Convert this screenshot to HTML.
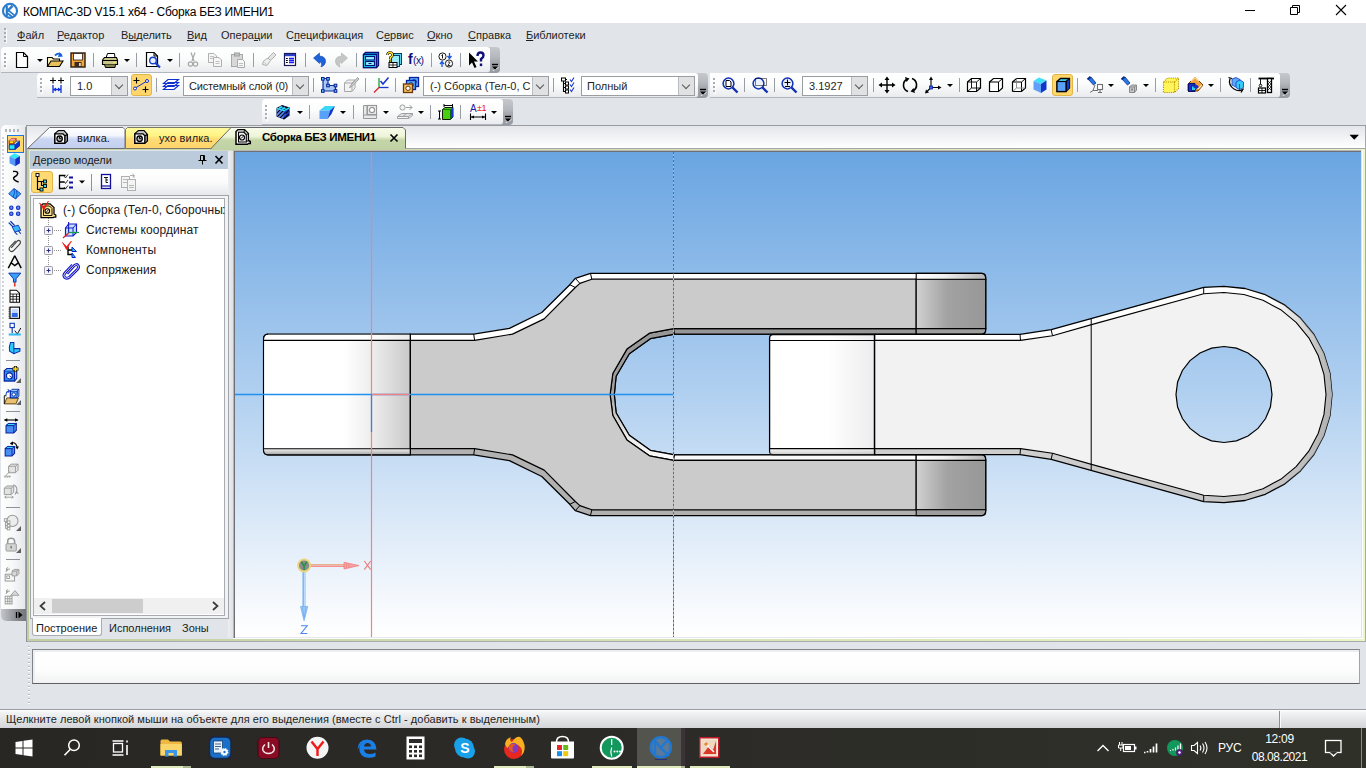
<!DOCTYPE html>
<html><head><meta charset="utf-8"><title>KOMPAS-3D</title>
<style>
*{box-sizing:border-box;margin:0;padding:0}
html,body{width:1366px;height:768px;overflow:hidden;background:#e1e5e9;font-family:"Liberation Sans",sans-serif;font-size:11px;color:#1e1e1e}
.abs{position:absolute}
#title{left:0;top:0;width:1366px;height:23px;background:#fff}
#title .t{left:23px;top:5px;font-size:12px;letter-spacing:-0.23px;color:#000;white-space:pre}
#menu{left:0;top:23px;width:1366px;height:25px;background:#e1e5e9}
#menu span{position:absolute;top:6px;font-size:11px;color:#1e1e1e;white-space:pre}
#menu u{text-decoration:underline;text-underline-offset:1px}
.tb{position:absolute;height:25px;background:linear-gradient(#ffffff 0%,#fbfcfc 45%,#e9ebee 100%);border-bottom:1px solid #b3b7bd;border-radius:0 0 0 0}
.tbend{position:absolute;height:25px;width:9px;background:linear-gradient(#c6c8cc 0%,#b4b7bc 40%,#a2a6ad 60%,#969aa2 100%);border-radius:0 4px 4px 0}
.grip{position:absolute;width:2px;top:4px;height:15px;background:repeating-linear-gradient(#a9adb3 0 2px,transparent 2px 4px);box-shadow:1px 1px 0 rgba(255,255,255,.9)}
.sep{position:absolute;top:4px;width:1px;height:14px;background:#9a9da3}
.ic{position:absolute}
.combo{position:absolute;height:19px;top:3px;background:#fff;border:1px solid #9a9da2;font-size:11px;color:#1e1e1e;white-space:pre;overflow:hidden}
.combo span{position:absolute;left:4px;top:3px}
.combo i{position:absolute;right:0;top:0;width:16px;height:18px;background:#e0e1e3;border-left:1px solid #b9bcc0}
.combo i:after{content:"";position:absolute;left:4px;top:4.500px;width:5px;height:5px;border-right:1px solid #555;border-bottom:1px solid #555;transform:rotate(45deg)}
.dd{position:absolute;width:0;height:0;border-left:3px solid transparent;border-right:3px solid transparent;border-top:3px solid #000}
#taskbar{left:0;top:728px;width:1366px;height:40px;background:linear-gradient(90deg,#292724 0%,#2c2b27 50%,#2f3129 100%)}
#status{left:0;top:709px;width:1366px;height:19px;border-top:1px solid #9a9da2;background:linear-gradient(#ffffff 0,#f3f4f5 2px,#e4e6e8 50%,#d3d5d8 100%)}
#status span{position:absolute;left:6px;top:3px;font-size:11px;color:#1e1e1e;white-space:pre;letter-spacing:0.04px}
</style></head><body>
<div id="title" class="abs"><span class="abs t">КОМПАС-3D V15.1 x64 - Сборка БЕЗ ИМЕНИ1</span></div>
<svg class="abs" style="left:0;top:0" width="1366" height="23" fill="none">
<circle cx="10" cy="10.900" r="7" fill="#fff" stroke="#2a7ccc" stroke-width="2.100"/>
<path d="M6.800,6 L6.800,16" stroke="#2a7ccc" stroke-width="2.200"/><path d="M7,11.300 L12.500,5.800" stroke="#2a7ccc" stroke-width="2.400"/><path d="M8,10.200 L15.500,16.200 M6.500,12.500 L13,17.500" stroke="#2a7ccc" stroke-width="1.700"/>
<path d="M1245,10.500 L1255,10.500" stroke="#000" stroke-width="1"/>
<path d="M1290.500,7.500 L1297.500,7.500 L1297.500,14.500 L1290.500,14.500Z M1292.500,7.500 L1292.500,5.500 L1299.500,5.500 L1299.500,12.500 L1297.500,12.500" stroke="#000" stroke-width="1"/>
<path d="M1336,5 L1346,15 M1346,5 L1336,15" stroke="#000" stroke-width="1.100"/>
</svg>
<div id="menu" class="abs">
<div class="grip" style="left:4px;top:5px;height:14px"></div>
<span style="left:17px"><u>Ф</u>айл</span>
<span style="left:57px"><u>Р</u>едактор</span>
<span style="left:121px">В<u>ы</u>делить</span>
<span style="left:187px"><u>В</u>ид</span>
<span style="left:221px">Опера<u>ц</u>ии</span>
<span style="left:286px">С<u>п</u>ецификация</span>
<span style="left:376px">С<u>е</u>рвис</span>
<span style="left:427px"><u>О</u>кно</span>
<span style="left:468px"><u>С</u>правка</span>
<span style="left:526px"><u>Б</u>иблиотеки</span>
</div>
<!--TOOLBARS-->
<div class="tbend" style="left:487px;top:47px;height:26px;width:13px"></div>
<div class="tb" style="left:1px;top:47px;width:489px;height:26px;border-radius:4px 3px 3px 0"></div>
<div class="grip" style="left:4px;top:53px"></div>
<svg class="abs" style="left:491px;top:63px" width="8" height="8"><path d="M1.5,8 L7.5,4.500" stroke="#fff" stroke-width="0.900" opacity="0.850"/><path d="M1,1.500 L7,1.500" stroke="#000" stroke-width="1.400"/><path d="M1,3.500 L7,3.500 L4,6.800Z" fill="#000"/></svg>
<svg class="ic" style="left:13px;top:51px" width="18" height="18" viewBox="0 0 18 18" fill="none"><path d="M3.5,1.5 L10.500,1.500 L14.500,5.500 L14.500,16.500 L3.500,16.500Z" fill="#fff" stroke="#000" stroke-width="1.2"/><path d="M10.500,1.500 L10.500,5.500 L14.500,5.500" stroke="#000" stroke-width="1"/></svg>
<div class="dd" style="left:37px;top:59px"></div>
<svg class="ic" style="left:46px;top:51px" width="18" height="18" viewBox="0 0 18 18" fill="none"><path d="M1.500,15.500 L1.500,6.500 L6,6.500 L7.500,8 L13.500,8 L13.500,10" fill="#fff6c0" stroke="#000" stroke-width="1.1"/><path d="M1.500,15.500 L5,10 L17,10 L13.500,15.500Z" fill="#e9c35a" stroke="#000" stroke-width="1.1"/><path d="M9,4.500 Q12.500,1 15.500,4" stroke="#1560e0" stroke-width="1.800"/><path d="M13.500,1 L17,5.500 L12,6Z" fill="#1560e0"/></svg>
<svg class="ic" style="left:69px;top:51px" width="18" height="18" viewBox="0 0 18 18" fill="none"><rect x="2" y="2" width="14" height="14" fill="#f0a43a" stroke="#2a1a10" stroke-width="1.4"/><rect x="4.500" y="2.500" width="9" height="6.500" fill="#fff" stroke="#2a1a10" stroke-width="0.8"/><rect x="5.500" y="11" width="7" height="5" fill="#3a2a20"/><rect x="10" y="12" width="1.800" height="3" fill="#f0d8b0"/></svg>
<div class="sep" style="left:93px;top:53px"></div>
<svg class="ic" style="left:101px;top:51px" width="18" height="18" viewBox="0 0 18 18" fill="none"><path d="M5,7 L6.500,2.500 L13.500,2.500 L14,7" fill="#fff" stroke="#000"/><path d="M1.500,9 L3.500,6.500 L15.500,6.500 L16.500,9 L16.500,13.500 L1.500,13.500Z" fill="#c9c48a" stroke="#000" stroke-width="1.1"/><path d="M1.500,9.500 L16.500,9.500" stroke="#000"/><path d="M3.500,13.500 L4.500,16.500 L14,16.500 L14.500,13.500" fill="#8a8650" stroke="#000"/><rect x="12" y="10.800" width="3" height="1.400" fill="#f0e060"/></svg>
<div class="dd" style="left:124px;top:59px"></div>
<div class="sep" style="left:136px;top:53px"></div>
<svg class="ic" style="left:144px;top:51px" width="18" height="18" viewBox="0 0 18 18" fill="none"><path d="M2.500,1.500 L10,1.500 L13.500,5 L13.500,15.500 L2.500,15.500Z" fill="#fff" stroke="#000" stroke-width="1.2"/><path d="M10,1.500 L10,5 L13.500,5" stroke="#000"/><circle cx="9" cy="9.500" r="3.300" fill="#e8f2ff" stroke="#1540c8" stroke-width="1.400"/><path d="M11.500,12 L16,16.500" stroke="#1540c8" stroke-width="2.200"/></svg>
<div class="dd" style="left:167px;top:59px"></div>
<div class="sep" style="left:179px;top:53px"></div>
<svg class="ic" style="left:184px;top:51px" width="18" height="18" viewBox="0 0 18 18" fill="none"><path d="M7,1.500 L10,10 M11,1.500 L8,10" stroke="#a8a8a8" stroke-width="1.2"/><circle cx="6.500" cy="13" r="2.200" stroke="#a8a8a8" stroke-width="1.200"/><circle cx="11.500" cy="13" r="2.200" stroke="#a8a8a8" stroke-width="1.200"/></svg>
<svg class="ic" style="left:206px;top:51px" width="18" height="18" viewBox="0 0 18 18" fill="none"><path d="M2.500,2.500 L8,2.500 L10.500,5 L10.500,11.500 L2.500,11.500Z" fill="#f6f6f6" stroke="#b0b0b0"/><path d="M7.500,6.500 L13,6.500 L15.500,9 L15.500,15.500 L7.500,15.500Z" fill="#f6f6f6" stroke="#b0b0b0"/><path d="M4,5.500 L8,5.500 M4,7.500 L7,7.500 M9.500,10.500 L13.500,10.500 M9.500,12.500 L13.500,12.500" stroke="#c0c0c0"/></svg>
<svg class="ic" style="left:229px;top:51px" width="18" height="18" viewBox="0 0 18 18" fill="none"><rect x="2.500" y="3.500" width="11" height="12" fill="#d8d8d8" stroke="#a8a8a8"/><rect x="5.500" y="2" width="5" height="3" fill="#c0c0c0" stroke="#a0a0a0"/><path d="M8.500,8.500 L13.500,8.500 L15.500,10.500 L15.500,16.500 L8.500,16.500Z" fill="#f8f8f8" stroke="#a8a8a8"/><path d="M10,12.500 L14,12.500 M10,14.500 L14,14.500" stroke="#c0c0c0"/></svg>
<div class="sep" style="left:253px;top:53px"></div>
<svg class="ic" style="left:260px;top:51px" width="18" height="18" viewBox="0 0 18 18" fill="none"><path d="M13.500,1.500 L16,4 L10.500,9.500 L8,7Z" fill="#e4e4e4" stroke="#b0b0b0"/><path d="M8,7 L10.500,9.500 L7,14.500 L2.500,13.500 L3.500,10 Z" fill="#eee" stroke="#b0b0b0"/><path d="M4.500,11.500 L6.500,13.500" stroke="#c0c0c0"/></svg>
<svg class="ic" style="left:281px;top:51px" width="18" height="18" viewBox="0 0 18 18" fill="none"><rect x="3.500" y="2.500" width="11" height="12" fill="#fff" stroke="#1a1a5a" stroke-width="1.200"/><rect x="4" y="3" width="10" height="2.200" fill="#2a3ec8"/><path d="M8,7.500 L13,7.500 M8,9.500 L13,9.500 M8,11.500 L13,11.500" stroke="#1a1af0" stroke-width="1.300"/><path d="M5,7.500 L6.800,7.500 M5,9.500 L6.800,9.500 M5,11.500 L6.800,11.500" stroke="#000" stroke-width="1.200"/></svg>
<div class="sep" style="left:305px;top:53px"></div>
<svg class="ic" style="left:311px;top:51px" width="18" height="18" viewBox="0 0 18 18" fill="none"><path d="M2.500,7 L8.500,2 L8.500,5 Q15,5.500 14.500,11 Q14,14.500 10,16 Q12,12.500 8.500,10.500 L8.500,12.500Z" fill="#1c62d8" stroke="#1446a8" stroke-width="0.6"/></svg>
<svg class="ic" style="left:332px;top:51px" width="18" height="18" viewBox="0 0 18 18" fill="none"><path d="M15.500,7 L9.500,2 L9.500,5 Q3,5.500 3.500,11 Q4,14.500 8,16 Q6,12.500 9.500,10.500 L9.500,12.500Z" fill="#c6c6c6" stroke="#b0b0b0" stroke-width="0.6"/></svg>
<div class="sep" style="left:356px;top:53px"></div>
<svg class="ic" style="left:362px;top:51px" width="18" height="18" viewBox="0 0 18 18" fill="none"><path d="M1.500,3.500 L3.500,1.500 L16.500,1.500 L16.500,14.500 L14.500,16.500 L1.500,16.500Z" fill="#10a8d8" stroke="#08107a" stroke-width="1.300"/><rect x="1.500" y="3.500" width="13" height="13" fill="#20e0f8" stroke="#08107a" stroke-width="1.300"/><rect x="3.500" y="5.500" width="9" height="3.500" fill="#90f4ff" stroke="#08107a" stroke-width="1.100"/><rect x="3.500" y="10.500" width="9" height="4" fill="#90f4ff" stroke="#08107a" stroke-width="1.100"/><path d="M6.500,12.500 L9.500,12.500" stroke="#08107a" stroke-width="1"/></svg>
<svg class="ic" style="left:385px;top:51px" width="18" height="18" viewBox="0 0 18 18" fill="none"><rect x="8.500" y="2.500" width="8" height="11" fill="#58d8f0" stroke="#0a3a6a"/><rect x="6.500" y="4.500" width="8" height="11" fill="#98ecf8" stroke="#0a3a6a"/><rect x="4" y="11.500" width="8" height="5" fill="#fff" stroke="#000"/><path d="M4,14 L12,14 M8,11.500 L8,16.500" stroke="#000" stroke-width="0.8"/><path d="M2.500,4 Q2.500,1.500 5,1.500 Q7.500,1.500 7.500,4 Q7.500,5.500 5.500,6.500 L5.500,8" stroke="#000" stroke-width="2.600"/><path d="M2.500,4 Q2.500,1.500 5,1.500 Q7.500,1.500 7.500,4 Q7.500,5.500 5.500,6.500 L5.500,8" stroke="#ffe020" stroke-width="1.400"/><rect x="4.500" y="9" width="2" height="2" fill="#ffe020" stroke="#000" stroke-width="0.600"/></svg>
<span class="abs" style="left:408px;top:51px;font-size:14px;font-weight:bold;color:#101078;white-space:pre">f</span><span class="abs" style="left:413px;top:54px;font-size:10.500px;color:#101078;letter-spacing:-0.600px;white-space:pre">(x)</span>
<div class="sep" style="left:431px;top:53px"></div>
<svg class="ic" style="left:437px;top:51px" width="18" height="18" viewBox="0 0 18 18" fill="none"><circle cx="5.500" cy="5.500" r="3.600" fill="#fff" stroke="#000" stroke-width="0.9"/><circle cx="12" cy="12.500" r="3.600" fill="#fff" stroke="#000" stroke-width="0.9"/><path d="M5.500,3.500 L5.500,7.500 M4.500,4.500 L5.500,3.500" stroke="#000" stroke-width="0.9"/><path d="M10.800,11.500 Q12,10 13,11.500 L10.800,14.500 L13.500,14.500" stroke="#000" stroke-width="0.8"/><path d="M12.500,2 L12.500,7 M10.500,5 L12.500,7.500 L14.500,5" stroke="#1858e0" stroke-width="1.300"/><path d="M5,16 L5,11 M3,13 L5,10.500 L7,13" stroke="#1858e0" stroke-width="1.300"/></svg>
<div class="sep" style="left:460px;top:53px"></div>
<svg class="ic" style="left:467px;top:51px" width="18" height="18" viewBox="0 0 18 18" fill="none"><path d="M2,1.500 L2,14.500 L5,11.500 L7.500,17 L9.500,16 L7,10.500 L11,10.500Z" fill="#000"/><path d="M10.500,5 Q10.500,1.500 13.500,1.500 Q16.500,1.500 16.500,4.500 Q16.500,6.500 14,8 L14,10.500" stroke="#10107a" stroke-width="2.400"/><rect x="12.800" y="12.500" width="2.400" height="2.600" fill="#10107a"/></svg>
<div class="tbend" style="left:695px;top:73px;height:25px;width:13px"></div>
<div class="tb" style="left:37px;top:73px;width:661px;height:25px;border-radius:4px 3px 3px 0"></div>
<div class="grip" style="left:40px;top:78px"></div>
<svg class="abs" style="left:699px;top:88px" width="8" height="8"><path d="M1.5,8 L7.5,4.500" stroke="#fff" stroke-width="0.900" opacity="0.850"/><path d="M1,1.500 L7,1.500" stroke="#000" stroke-width="1.400"/><path d="M1,3.500 L7,3.500 L4,6.800Z" fill="#000"/></svg>
<svg class="ic" style="left:48px;top:76px" width="18" height="18" viewBox="0 0 18 18" fill="none"><path d="M5,1.500 L5,7.500 M2,4.500 L8,4.500 M13,1.500 L13,7.500 M10,4.500 L16,4.500" stroke="#000" stroke-width="1.1"/><path d="M5,9 L5,17 M13,9 L13,17 M5.500,13.500 L12.500,13.500" stroke="#1030d8" stroke-width="1.300"/><path d="M10,11.500 L12.800,13.500 L10,15.500Z M8,11.500 L5.200,13.500 L8,15.500Z" fill="#1030d8"/></svg>
<div class="combo" style="left:70px;top:76px;width:58px;height:20px"><span style="left:6px">1.0</span><i></i></div>
<div class="abs" style="left:131px;top:74px;width:21px;height:22px;background:#ffd66b;border:1px solid #e2b548;border-radius:3px"></div>
<svg class="ic" style="left:132px;top:76px" width="18" height="18" viewBox="0 0 18 18" fill="none"><path d="M4.500,1.500 L4.500,7.500 M1.500,4.500 L7.500,4.500 M13.500,10.500 L13.500,16.500 M10.500,13.500 L16.500,13.500" stroke="#000" stroke-width="1.100"/><path d="M2.500,12.500 L15,5" stroke="#1030c8" stroke-width="1"/><circle cx="3" cy="12.500" r="1.500" fill="#fff" stroke="#1030c8"/><circle cx="15" cy="5" r="1.500" fill="#fff" stroke="#1030c8"/></svg>
<div class="sep" style="left:156px;top:78px"></div>
<svg class="ic" style="left:162px;top:76px" width="18" height="18" viewBox="0 0 18 18" fill="none"><path d="M1.500,13.500 L6,9.500 L16.500,9.500 L12,13.500Z M1.500,10.500 L6,6.500 L16.500,6.500 L12,10.500Z M1.500,7.500 L6,3.500 L16.500,3.500 L12,7.500Z" fill="#fff" stroke="#1030d0" stroke-width="1.200"/></svg>
<div class="combo" style="left:183px;top:76px;width:126px;height:20px"><span style="left:5px"><span style="letter-spacing:-0.170px;position:static">Системный слой (0)</span></span><i></i></div>
<div class="sep" style="left:313px;top:78px"></div>
<svg class="ic" style="left:320px;top:76px" width="18" height="18" viewBox="0 0 18 18" fill="none"><path d="M3,2.500 L8,2.500 L8,9.500 L15.500,9.500 L15.500,15 L3,15Z" fill="#a8c8f8" stroke="#1030a0" stroke-width="1.200"/><g fill="#60d8f8" stroke="#0a1a90" stroke-width="1"><rect x="1.500" y="1.500" width="2.600" height="2.600"/><rect x="6.700" y="1.500" width="2.600" height="2.600"/><rect x="6.700" y="8.200" width="2.600" height="2.600"/><rect x="14.200" y="8.200" width="2.600" height="2.600"/><rect x="1.500" y="13.700" width="2.600" height="2.600"/><rect x="14.200" y="13.700" width="2.600" height="2.600"/></g></svg>
<svg class="ic" style="left:342px;top:76px" width="18" height="18" viewBox="0 0 18 18" fill="none"><path d="M2.500,7 L5.500,4 L13,4 L13,12 L10,15.500 L2.500,15.500Z" fill="#f2f2f2" stroke="#a8a8a8"/><path d="M2.500,7 L10,7 L10,15.500 M10,7 L13,4" stroke="#a8a8a8"/><path d="M15.500,1.500 L9,9 L7.500,11.500 L10,10.500 L17,3Z" fill="#d0d0d0" stroke="#a0a0a0"/></svg>
<div class="sep" style="left:365px;top:78px"></div>
<svg class="ic" style="left:372px;top:76px" width="18" height="18" viewBox="0 0 18 18" fill="none"><path d="M7,2 L7,11.500" stroke="#20a030" stroke-width="1.300"/><path d="M7,11.500 L16.500,11.500" stroke="#1838d0" stroke-width="1.300"/><path d="M7,11.500 L2,16.500" stroke="#e02020" stroke-width="1.300"/><path d="M8.500,5 L11,8 L16.500,1.500" stroke="#1838d0" stroke-width="1.600"/></svg>
<div class="sep" style="left:395px;top:78px"></div>
<svg class="ic" style="left:402px;top:76px" width="18" height="18" viewBox="0 0 18 18" fill="none"><rect x="7.500" y="1.500" width="9" height="9" fill="#58b0f8" stroke="#0820a0" stroke-width="1.300"/><circle cx="12" cy="6" r="2.300" fill="#fff" stroke="#0820a0"/><rect x="4.500" y="4.500" width="9" height="9" fill="#58b0f8" stroke="#0820a0" stroke-width="1.300"/><circle cx="9" cy="9" r="2.300" fill="#fff" stroke="#0820a0"/><rect x="1.500" y="8" width="9" height="8.500" fill="#f8c060" stroke="#6a3808" stroke-width="1.300"/><circle cx="6" cy="12.300" r="2.200" fill="#fff" stroke="#6a3808"/></svg>
<div class="combo" style="left:423px;top:76px;width:126px;height:20px"><span style="left:6px">(-) Сборка (Тел-0, С</span><i></i></div>
<div class="sep" style="left:553px;top:78px"></div>
<svg class="ic" style="left:559px;top:76px" width="18" height="18" viewBox="0 0 18 18" fill="none"><path d="M4.500,2 L4.500,16 M4.500,3.500 L8,3.500 M4.500,7.500 L8,7.500 M4.500,11.500 L8,11.500 M4.500,15.500 L8,15.500" stroke="#000" stroke-width="1.100"/><rect x="2.500" y="2" width="4" height="3" fill="#fff" stroke="#000"/><rect x="6.500" y="6" width="3" height="3" fill="#fff" stroke="#000"/><rect x="6.500" y="10" width="3" height="3" fill="#fff" stroke="#000"/><rect x="6.500" y="14" width="3" height="3" fill="#fff" stroke="#000"/><path d="M11,3.500 L12.500,5.500 L15,1.500 M11,8.500 L12.500,10.500 L15,6.500 M11,13.500 L12.500,15.500 L15,11.500" stroke="#1838d8" stroke-width="1.100"/></svg>
<div class="combo" style="left:581px;top:76px;width:114px;height:20px"><span style="left:5px">Полный</span><i></i></div>
<div class="tbend" style="left:1277px;top:73px;height:25px;width:13px"></div>
<div class="tb" style="left:710px;top:73px;width:570px;height:25px;border-radius:0 3px 3px 0"></div>
<div class="grip" style="left:713px;top:78px"></div>
<svg class="abs" style="left:1281px;top:88px" width="8" height="8"><path d="M1.5,8 L7.5,4.500" stroke="#fff" stroke-width="0.900" opacity="0.850"/><path d="M1,1.500 L7,1.500" stroke="#000" stroke-width="1.400"/><path d="M1,3.500 L7,3.500 L4,6.800Z" fill="#000"/></svg>
<svg class="ic" style="left:721px;top:76px" width="18" height="18" viewBox="0 0 18 18" fill="none"><circle cx="7.500" cy="7.500" r="5.400" fill="#eaf2ff" stroke="#1030b0" stroke-width="1.500"/><path d="M11.500,11.500 L16.500,16.500" stroke="#1030b0" stroke-width="2.400"/><path d="M5,4.500 L8.500,4.500 L10,6 L10,10.500 L5,10.500Z" fill="#fff" stroke="#000"/></svg>
<div class="sep" style="left:744px;top:78px"></div>
<svg class="ic" style="left:751px;top:76px" width="18" height="18" viewBox="0 0 18 18" fill="none"><circle cx="7.500" cy="7.500" r="5.400" fill="#eaf2ff" stroke="#1030b0" stroke-width="1.500"/><path d="M11.500,11.500 L16.500,16.500" stroke="#1030b0" stroke-width="2.400"/><rect x="4.500" y="2.500" width="11" height="7" fill="none" stroke="#000" stroke-dasharray="1 1"/></svg>
<div class="sep" style="left:774px;top:78px"></div>
<svg class="ic" style="left:780px;top:76px" width="18" height="18" viewBox="0 0 18 18" fill="none"><circle cx="7.500" cy="7.500" r="5.400" fill="#eaf2ff" stroke="#1030b0" stroke-width="1.500"/><path d="M11.500,11.500 L16.500,16.500" stroke="#1030b0" stroke-width="2.400"/><path d="M4.500,6.500 L10.500,6.500 M7.500,3.500 L7.500,9.500 M5,10.500 L10,10.500" stroke="#000" stroke-width="1.100"/></svg>
<div class="combo" style="left:802px;top:76px;width:66px;height:20px"><span style="left:6px">3.1927</span><i></i></div>
<div class="sep" style="left:873px;top:78px"></div>
<svg class="ic" style="left:878px;top:76px" width="18" height="18" viewBox="0 0 18 18" fill="none"><path d="M9,2 L9,16 M2,9 L16,9" stroke="#000" stroke-width="1.400"/><path d="M9,0.500 L6.500,4 L11.500,4Z M9,17.500 L6.500,14 L11.500,14Z M0.500,9 L4,6.500 L4,11.500Z M17.500,9 L14,6.500 L14,11.500Z" fill="#000"/></svg>
<svg class="ic" style="left:901px;top:76px" width="18" height="18" viewBox="0 0 18 18" fill="none"><path d="M6.500,3 Q2,5 2.500,10 Q3,14 7,15.500" stroke="#000" stroke-width="1.600"/><path d="M11.500,15 Q16,13 15.500,8 Q15,4 11,2.500" stroke="#000" stroke-width="1.600"/><path d="M4,1 L8.500,2.500 L5.500,6Z M14,17 L9.500,15.500 L12.500,12Z" fill="#000"/></svg>
<svg class="ic" style="left:924px;top:76px" width="18" height="18" viewBox="0 0 18 18" fill="none"><path d="M7,2.500 L7,11.500 L16,11.500 M7,11.500 L2,16.500" stroke="#000" stroke-width="1.100"/><path d="M7,0.500 L5,4 L9,4Z M17.500,11.500 L14,9.500 L14,13.500Z M1,17.500 L2,13.500 L5,16.500Z" fill="#000"/><rect x="5.500" y="10" width="3" height="3" fill="#3060f0" stroke="#0820a0" stroke-width="0.800"/></svg>
<div class="dd" style="left:947px;top:84px"></div>
<div class="sep" style="left:959px;top:78px"></div>
<svg class="ic" style="left:965px;top:76px" width="18" height="18" viewBox="0 0 18 18" fill="none"><path d="M2.500,6 L6.500,2.500 L15.500,2.500 L15.500,12 L11.500,15.500 L2.500,15.500Z" fill="#fff" stroke="#000" stroke-width="1.200"/><path d="M2.500,6 L11.500,6 L11.500,15.500 M11.500,6 L15.500,2.500 M6.500,2.500 L6.500,12 L15.500,12 M6.500,12 L2.500,15.500" stroke="#000" stroke-width="0.900"/></svg>
<svg class="ic" style="left:987px;top:76px" width="18" height="18" viewBox="0 0 18 18" fill="none"><path d="M2.500,6 L6.500,2.500 L15.500,2.500 L15.500,12 L11.500,15.500 L2.500,15.500Z" fill="#fff" stroke="#000" stroke-width="1.200"/><path d="M2.500,6 L11.500,6 L11.500,15.500 M11.500,6 L15.500,2.500" stroke="#000" stroke-width="1"/></svg>
<svg class="ic" style="left:1010px;top:76px" width="18" height="18" viewBox="0 0 18 18" fill="none"><path d="M2.500,6 L6.500,2.500 L15.500,2.500 L15.500,12 L11.500,15.500 L2.500,15.500Z" fill="#fff" stroke="#000" stroke-width="1.200"/><path d="M2.500,6 L11.500,6 L11.500,15.500 M11.500,6 L15.500,2.500" stroke="#000" stroke-width="1"/><path d="M6.500,2.500 L6.500,12 L15.500,12 M6.500,12 L2.500,15.500" stroke="#888" stroke-width="0.900"/></svg>
<svg class="ic" style="left:1031px;top:76px" width="18" height="18" viewBox="0 0 18 18" fill="none"><path d="M2.500,5 L8,1.500 L15.500,4.500 L10,8Z" fill="#40e0f8"/><path d="M2.500,5 L10,8 L10,17 L2.500,13.500Z" fill="#60a0f8"/><path d="M10,8 L15.500,4.500 L15.500,13.500 L10,17Z" fill="#1038c8"/></svg>
<div class="abs" style="left:1052px;top:74px;width:21px;height:22px;background:#ffd66b;border:1px solid #e2b548;border-radius:3px"></div>
<svg class="ic" style="left:1054px;top:76px" width="18" height="18" viewBox="0 0 18 18" fill="none"><path d="M3,5.500 L6.500,2.500 L15.500,2.500 L15.500,12 L12,15.500 L3,15.500Z" fill="#40d8f8" stroke="#000" stroke-width="1.300"/><path d="M3,5.500 L12,5.500 L12,15.500Z" fill="#60a8f8"/><path d="M12,5.500 L15.500,2.500 L15.500,12 L12,15.500Z" fill="#1038c8"/><path d="M3,5.500 L12,5.500 L12,15.500 M12,5.500 L15.500,2.500" stroke="#000" stroke-width="1.200"/><rect x="3" y="5.500" width="9" height="10" fill="#5aa0f8" stroke="#000" stroke-width="1.200"/></svg>
<div class="sep" style="left:1077px;top:78px"></div>
<svg class="ic" style="left:1086px;top:76px" width="18" height="18" viewBox="0 0 18 18" fill="none"><path d="M2,3 L5,1 L10,7 L7.500,9Z" fill="#2878e0" stroke="#0a2a90" stroke-width="0.800"/><path d="M1.500,3.500 L4.500,0.800" stroke="#0a2a90" stroke-width="2"/><path d="M9,9 L7,14.500 L4,16.500 M7,14.500 L12,14.500" stroke="#707070" stroke-width="1"/><rect x="11.500" y="8.500" width="5" height="5" fill="#fff" stroke="#707070" stroke-width="1.100"/><path d="M14,13.500 L14,16.500 M12,16.500 L16,16.500" stroke="#707070" stroke-width="1.100"/></svg>
<div class="dd" style="left:1108px;top:84px"></div>
<svg class="ic" style="left:1120px;top:76px" width="18" height="18" viewBox="0 0 18 18" fill="none"><path d="M2,3 L5,1 L10,7 L7.500,9Z" fill="#2878e0" stroke="#0a2a90" stroke-width="0.800"/><path d="M1.500,3.500 L4.500,0.800" stroke="#0a2a90" stroke-width="2"/><path d="M9.500,11 L11.500,9 L16.500,9 L16.500,14 L14.500,16.500 L9.500,16.500Z" fill="#c8c8c8" stroke="#888"/><path d="M9.500,11 L14.500,11 L14.500,16.500 M14.500,11 L16.500,9" stroke="#888"/><rect x="11" y="12.500" width="2" height="2" fill="#888"/></svg>
<div class="dd" style="left:1143px;top:84px"></div>
<div class="sep" style="left:1155px;top:78px"></div>
<svg class="ic" style="left:1162px;top:76px" width="18" height="18" viewBox="0 0 18 18" fill="none"><path d="M1.500,6 L5.500,2 L16.500,2 L16.500,12.500 L12.500,16.500 L1.500,16.500Z" fill="#fff45a"/><path d="M1.500,6 L5.500,2 L16.500,2 L16.500,12.500 L12.500,16.500 L1.500,16.500Z M1.500,6 L12.500,6 L12.500,16.500 M12.500,6 L16.500,2" stroke="#b89800" stroke-width="1.100" stroke-dasharray="1.200 1"/></svg>
<svg class="ic" style="left:1186px;top:76px" width="18" height="18" viewBox="0 0 18 18" fill="none"><path d="M9,1 L17,9 L12,15 L2,15 L2,8Z" fill="#f0a040" stroke="#7a3c00" stroke-width="1"/><path d="M5,5 L9,1.500 L13,5 M12,13 L16,9" stroke="#ffe0a0" stroke-width="1.200"/><path d="M2.500,7.500 L9,7.500 L9,15.500 L2.500,15.500Z" fill="#1830c8" stroke="#08106a"/><path d="M5.500,10 L12,10 L9,14.500 L5.500,14.500Z" fill="#30d0f0" stroke="#08106a" stroke-width="0.800"/><path d="M7,11 L10,8.500 L13,11 L10,13Z" fill="#1830c8"/></svg>
<div class="dd" style="left:1208px;top:84px"></div>
<div class="sep" style="left:1220px;top:78px"></div>
<svg class="ic" style="left:1227px;top:76px" width="18" height="18" viewBox="0 0 18 18" fill="none"><path d="M5,3 L9,1.500 L13,3.500 L13,9 L9,11 L5,9Z" fill="#60a8f8" stroke="#1040c0" stroke-width="0.800"/><path d="M9,6 L13,4 L16.500,6 L16.500,11.500 L12.500,13.500 L9,11.500Z" fill="#38c8f8" stroke="#1040c0" stroke-width="0.800"/><path d="M12.500,8 L12.500,13.500" stroke="#1040c0" stroke-width="0.800"/><path d="M3,2.500 Q1,9 7,13 Q12,16 15.500,13.500" stroke="#000" stroke-width="1.300"/><path d="M1.500,1.500 L5,2.500 M14,16.500 L16.500,12.500" stroke="#000" stroke-width="1.300"/></svg>
<div class="sep" style="left:1250px;top:78px"></div>
<svg class="ic" style="left:1257px;top:76px" width="18" height="18" viewBox="0 0 18 18" fill="none"><path d="M1.500,2.500 L17,2.500" stroke="#000" stroke-width="1.800"/><rect x="10.500" y="2.500" width="4" height="14" fill="#fff" stroke="#000" stroke-width="1.300"/><path d="M11,5 L14,8 M11,8 L14,11 M11,11 L14,14 M14,5 L11,8 M14,8 L11,11 M14,11 L11,14" stroke="#000" stroke-width="0.700"/><path d="M3.500,3 L3.500,8.500" stroke="#000" stroke-width="0.900"/><circle cx="3.500" cy="9.500" r="1.300" stroke="#000" stroke-width="0.900"/><rect x="1.500" y="12" width="7" height="5" fill="#fff" stroke="#000" stroke-width="1.200"/><path d="M5,12 L5,17 M1.500,14.500 L8.500,14.500" stroke="#000" stroke-width="0.900"/></svg>
<div class="tbend" style="left:500px;top:99px;height:26px;width:13px"></div>
<div class="tb" style="left:262px;top:99px;width:241px;height:26px;border-radius:4px 3px 3px 0"></div>
<div class="grip" style="left:265px;top:105px"></div>
<svg class="abs" style="left:504px;top:115px" width="8" height="8"><path d="M1.5,8 L7.5,4.500" stroke="#fff" stroke-width="0.900" opacity="0.850"/><path d="M1,1.500 L7,1.500" stroke="#000" stroke-width="1.400"/><path d="M1,3.500 L7,3.500 L4,6.800Z" fill="#000"/></svg>
<svg class="ic" style="left:274px;top:103px" width="18" height="18" viewBox="0 0 18 18" fill="none"><defs><clipPath id="scb"><path d="M2.500,5 L8,2 L15.500,4.500 L15.500,12.500 L10,16.500 L2.500,13.500Z"/></clipPath></defs><path d="M2.500,5 L8,2 L15.500,4.500 L15.500,12.500 L10,16.500 L2.500,13.500Z" fill="#050510"/><g clip-path="url(#scb)"><path d="M0,11 L8,3 M0,15 L11,4 M2,17 L12,7 M5,18 L12,11" stroke="#5a8cf8" stroke-width="1.700"/><path d="M10,10 L16,4 M10,14 L16,8 M10,18 L16,12" stroke="#1838d0" stroke-width="1.700"/><path d="M2.500,5.300 L10,7.500 L15.500,4.800 M5,3.800 L12.500,6.300" stroke="#20e8f8" stroke-width="1.300"/></g></svg>
<div class="dd" style="left:297px;top:111px"></div>
<div class="sep" style="left:309px;top:105px"></div>
<svg class="ic" style="left:318px;top:103px" width="18" height="18" viewBox="0 0 18 18" fill="none"><path d="M1.500,7.500 L7,3 L17,3 L12,7.500Z" fill="#38d8f8"/><path d="M1.500,7.500 L12,7.500 L9.500,16 L1.500,16Z" fill="#58a0f8"/><path d="M12,7.500 L17,3 L13.500,11 L9.500,16Z" fill="#1038c8"/></svg>
<div class="dd" style="left:340px;top:111px"></div>
<div class="sep" style="left:353px;top:105px"></div>
<svg class="ic" style="left:361px;top:103px" width="18" height="18" viewBox="0 0 18 18" fill="none"><path d="M2.500,2.500 L2.500,15.500 L15.500,15.500 L15.500,12 L6,12 L6,2.500Z" fill="#e8e8e8" stroke="#989898"/><rect x="6.500" y="2.500" width="9" height="9" fill="#f4f4f4" stroke="#989898" stroke-width="1.200"/><circle cx="11" cy="7" r="2.600" fill="#fff" stroke="#989898" stroke-width="1.200"/><path d="M2.500,12 L6,12" stroke="#989898"/></svg>
<div class="dd" style="left:383px;top:111px"></div>
<svg class="ic" style="left:396px;top:103px" width="18" height="18" viewBox="0 0 18 18" fill="none"><path d="M1.500,13.500 L5.500,10.500 L16.500,10.500 L12.500,13.500Z" fill="#e0e0e0" stroke="#a0a0a0"/><path d="M1.500,13.500 L1.500,15.500 L12.500,15.500 L12.500,13.500 M12.500,15.500 L16.500,12.500 L16.500,10.500 M7,13.500 L10.500,10.500" stroke="#a0a0a0"/><circle cx="6.500" cy="4.500" r="2.600" fill="#f4f4f4" stroke="#a0a0a0"/><path d="M10,4.500 L16,4.500 M13.500,2 L16,4.500 L13.500,7" stroke="#a0a0a0"/></svg>
<div class="dd" style="left:418px;top:111px"></div>
<div class="sep" style="left:430px;top:105px"></div>
<svg class="ic" style="left:437px;top:103px" width="18" height="18" viewBox="0 0 18 18" fill="none"><path d="M5.500,6.500 L8,4.500 L16,4.500 L16,14 L13.500,16.500 L5.500,16.500Z" fill="#48d010" stroke="#000" stroke-width="0.900"/><path d="M13.500,6.500 L16,4.500 L16,14 L13.500,16.500Z" fill="#1838d0"/><path d="M5.500,6.500 L13.500,6.500 L13.500,16.500" stroke="#0a5a0a" stroke-width="0.800"/><path d="M7,2.500 L15.500,2.500 M7,1 L7,4 M15.500,1 L15.500,4" stroke="#000" stroke-width="1"/><path d="M2.500,8 L2.500,16 M1,8 L4,8 M1,16 L4,16" stroke="#000" stroke-width="1"/></svg>
<div class="sep" style="left:460px;top:105px"></div>
<span class="abs" style="left:470px;top:103px;font-size:10px;color:#1818a8;white-space:pre">A</span><span class="abs" style="left:477px;top:103px;font-size:9px;color:#f01010;white-space:pre;letter-spacing:-0.500px">±1</span>
<svg class="ic" style="left:469px;top:103px" width="18" height="18" viewBox="0 0 18 18" fill="none"><path d="M1.500,10.500 L1.500,17 M16.500,10.500 L16.500,17 M2,14 L16,14" stroke="#000" stroke-width="1.100"/><path d="M2,14 L5,12.500 L5,15.500Z M16,14 L13,12.500 L13,15.500Z" fill="#000"/></svg>
<div class="dd" style="left:491px;top:111px"></div>
<!--/TOOLBARS-->
<!--TABS-->
<!-- tab strip -->
<div class="abs" style="left:26px;top:125px;width:1340px;height:24px;border-top:1px solid #989ba0;border-left:1px solid #989ba0;border-right:1px solid #a0a3a8;border-bottom:1px solid #a3a5a8;background:linear-gradient(#e4e6ea 0%,#f1f2f4 50%,#ffffff 100%)"></div>
<!-- doc frame (green) -->
<div class="abs" style="left:27px;top:149px;width:1338px;height:492px;background:#e1e5e9"></div>
<div class="abs" style="left:27px;top:149px;width:1338px;height:1px;background:linear-gradient(90deg,#c6d5a9 0%,#cfdcb2 30%,#e9f5c3 100%)"></div>
<div class="abs" style="left:27px;top:639px;width:1338px;height:2px;background:linear-gradient(90deg,#c0d0a2 0%,#cfdcb2 30%,#e9f5c3 100%)"></div>
<div class="abs" style="left:27px;top:149px;width:2px;height:492px;background:#bfcfa1"></div>
<div class="abs" style="left:1363px;top:149px;width:2px;height:492px;background:#ebf7c4"></div>
<div class="abs" style="left:1365px;top:126px;width:1px;height:516px;background:#a6a8ac"></div>
<div class="abs" style="left:26px;top:149px;width:1px;height:493px;background:#8e9196"></div>
<div class="abs" style="left:27px;top:641px;width:1339px;height:1px;background:#a9abae"></div>
<svg class="abs" style="left:26px;top:125px" width="400" height="26" viewBox="26 125 400 26">
<defs>
<linearGradient id="t1" x1="0" y1="0" x2="0" y2="1"><stop offset="0" stop-color="#ffffff"/><stop offset="0.38" stop-color="#f3f6fc"/><stop offset="0.55" stop-color="#cbd6f2"/><stop offset="1" stop-color="#c2cfee"/></linearGradient>
<linearGradient id="t2" x1="0" y1="0" x2="0" y2="1"><stop offset="0" stop-color="#fffca0"/><stop offset="0.38" stop-color="#fff384"/><stop offset="0.55" stop-color="#ffdc74"/><stop offset="1" stop-color="#ffd46a"/></linearGradient>
<linearGradient id="t3" x1="0" y1="0" x2="0" y2="1"><stop offset="0" stop-color="#f8fbea"/><stop offset="0.38" stop-color="#eef5d9"/><stop offset="0.55" stop-color="#c5d5a8"/><stop offset="1" stop-color="#bfd1a2"/></linearGradient>
</defs>
<path d="M27.500,148.500 L49.500,127.500 L123,127.500 L125,129.500 L125,148.500Z" fill="url(#t1)" stroke="#6e6e72" stroke-width="1"/>
<path d="M125.500,148.500 L125.500,129.500 L127.500,127.500 L231,127.500 L231,148.500Z" fill="url(#t2)" stroke="#7a7a6a" stroke-width="1"/>
<path d="M209.500,150.500 L231,127.500 L403,127.500 L405.500,130 L405.500,150.500Z" fill="url(#t3)" stroke="none"/>
<path d="M210.500,149 L231,127.500 L403,127.500 L405.500,130 L405.500,148.500" fill="none" stroke="#66686a" stroke-width="1"/>
<!-- tab icons -->
<g id="ti1" transform="translate(54,130)" fill="none" stroke="#000">
<path d="M0.800,3.800 L4.500,0.800 L10,0.800 L13.300,4.500 L13.300,11 L10.800,13.300 L0.800,13.300Z" fill="#fff" stroke-width="1.500"/>
<path d="M1.500,3.500 L4.700,1.300 L9.800,1.300 L12.800,4.500 L10.800,5.800 L9,3.800Z" fill="#c6c6c6" stroke="none"/>
<path d="M10.800,5.800 L12.900,4.600 L12.900,10.800 L10.800,12.800Z" fill="#808080" stroke="none"/>
<path d="M0.800,3.800 L9,3.800 L10.800,5.800 L10.800,13.300 M10.800,5.800 L13.300,4.500" stroke-width="1.300"/>
<circle cx="5.600" cy="8.700" r="2.700" fill="#b8b8b8" stroke-width="1.300"/><path d="M5.600,8.700 L5.600,6.800 M5.600,8.700 L7.300,8.700" stroke-width="1"/>
</g>
<use href="#ti1" x="80" y="0"/>
<g transform="translate(235,129)" fill="none" stroke="#000">
<path d="M1,2.500 L3,0.800 L9.500,0.800 L13.300,4.500 L13.300,11.500 L15.300,12.500 L15.300,14.500 L13.500,14.500 L12.500,15.300 L1,15.300Z" fill="#fff" stroke-width="1.500"/>
<path d="M3.500,1.300 L9.300,1.300 L12.800,4.700 L12.800,11.500 L11.300,12.500 L11.300,5.800 L9,3.500 L3.500,3.500Z" fill="#c8c8c8" stroke="none"/>
<path d="M3.500,3.300 L9,3.300 L11.300,5.800 L11.300,13 L3.500,13 Z" stroke-width="1.100" fill="#f4f4f4"/>
<path d="M9,3.300 L9.500,0.800 M11.300,5.800 L13.300,4.500 M11.300,13 L13.300,11.500" stroke-width="0.900"/>
<circle cx="7" cy="8.500" r="2.500" fill="#fff" stroke-width="1.200"/><path d="M5.800,9.700 L8.300,7.200" stroke-width="1"/>
</g>
</svg>
<span class="abs" style="left:77px;top:132px;font-size:11px;white-space:pre;color:#1a1a1a;letter-spacing:0.05px">вилка.</span>
<span class="abs" style="left:159px;top:132px;font-size:11px;white-space:pre;color:#1a1a1a;letter-spacing:0.1px">ухо вилка.</span>
<span class="abs" style="left:262px;top:131px;font-size:11.500px;font-weight:bold;white-space:pre;color:#000;letter-spacing:-0.330px">Сборка БЕЗ ИМЕНИ1</span>
<svg class="abs" style="left:389px;top:133px" width="10" height="10"><path d="M1.5,1.5 L8.5,8.5 M8.5,1.5 L1.5,8.5" stroke="#000" stroke-width="1.6"/></svg>
<svg class="abs" style="left:1349px;top:134px" width="11" height="7"><path d="M0.5,0.8 L10,0.8 L5.25,5.8Z" fill="#000"/></svg>
<!--/TABS-->
<!--LEFTBAR-->
<div class="abs" style="left:1px;top:125px;width:25px;height:496px;background:linear-gradient(90deg,#ffffff 0%,#f6f7f8 50%,#e4e6ea 100%);border-radius:5px 0 0 5px"></div>
<div class="abs" style="left:25px;top:127px;width:2px;height:494px;background:linear-gradient(90deg,#a4a7ac,#8e9196)"></div>
<div class="abs" style="left:5px;top:129px;width:16px;height:3px;background:repeating-linear-gradient(90deg,#b4b8be 0 2px,transparent 2px 4px)"></div>
<div class="abs" style="left:2px;top:137px;width:2px;height:214px;background:repeating-linear-gradient(#cfd2d6 0 2px,transparent 2px 4px)"></div>
<div class="abs" style="left:7px;top:135px;width:17px;height:18px;background:#ffd86e;border:1px solid #1a78e0"></div>
<svg class="ic" style="left:7.2px;top:136.2px" width="15.5" height="15.5" viewBox="0 0 18 18" fill="none"><path d="M2.500,10 L9.500,10 L9.500,15.500 L2.500,15.500Z" fill="#20e8f8" stroke="#0828a0" stroke-width="1.100"/><path d="M9.500,10 L14.500,6 L14.500,11.500 L9.500,15.500Z" fill="#1030d8" stroke="#0828a0"/><path d="M2.500,10 L7,6 L14.500,6 L9.500,10Z" fill="#a0f0f8" stroke="#0828a0" stroke-width="0.800"/><path d="M2.500,5.500 L5,3 L10.500,3 L10.500,6 L8,9 L2.500,9Z" fill="#f8e810" stroke="#a01010" stroke-width="1.100"/><path d="M2.500,5.500 L8,5.500 L8,9 M8,5.500 L10.500,3" stroke="#a01010"/><path d="M5,3 L10.500,3 L8,5.500 L2.500,5.500Z" fill="#f8a0a0"/></svg>
<svg class="ic" style="left:7.2px;top:152.2px" width="15.5" height="15.5" viewBox="0 0 18 18" fill="none"><path d="M3,5 L9,1.500 L15,4.500 L9.500,8Z" fill="#30e8f8"/><path d="M3,5 L9.500,8 L9.500,16.500 L3,13Z" fill="#5898f8"/><path d="M9.500,8 L15,4.500 L15,13 L9.500,16.500Z" fill="#1030c8"/></svg>
<svg class="ic" style="left:7.2px;top:169.2px" width="15.5" height="15.5" viewBox="0 0 18 18" fill="none"><path d="M7,3 Q12,2 12.500,5 Q12,7.500 9,9 Q6.500,10.500 8.500,12.500 Q10.500,14.500 13.500,15" stroke="#000" stroke-width="1.700"/></svg>
<svg class="ic" style="left:7.2px;top:186.2px" width="15.5" height="15.5" viewBox="0 0 18 18" fill="none"><path d="M2,9 L8,3 L11,5 L16,9 L10,15 L7,13Z" fill="#38a8f8" stroke="#0830b0" stroke-width="1"/><path d="M8,3 Q10,8 7,13 M11,5 Q13,10 10,15" stroke="#0830b0" stroke-width="0.800"/></svg>
<svg class="ic" style="left:7.2px;top:203.2px" width="15.5" height="15.5" viewBox="0 0 18 18" fill="none"><g stroke="#1030c8" stroke-width="1.300" fill="#6a8cf8"><circle cx="5" cy="5.500" r="2"/><circle cx="13" cy="5.500" r="2"/><circle cx="5" cy="12.500" r="2"/><circle cx="13" cy="12.500" r="2"/></g></svg>
<svg class="ic" style="left:7.2px;top:220.2px" width="15.5" height="15.5" viewBox="0 0 18 18" fill="none"><path d="M2,3 L7,8 M4,1.500 L9,6.500" stroke="#0830b0" stroke-width="1.500"/><path d="M6,8 L13,6 L16,12 L9,14Z" fill="#38b8f8" stroke="#0830b0"/><path d="M9,14 L12,17 M13,12 L16,16" stroke="#0830b0" stroke-width="1.200"/></svg>
<svg class="ic" style="left:7.2px;top:237.2px" width="15.5" height="15.5" viewBox="0 0 18 18" fill="none"><path d="M5,12.500 L11.500,5 Q13.500,3 15,4.500 Q16.500,6.500 14.500,8.500 L7.500,16 Q5,18 3,15.500 Q1.500,13.500 4,11 L10,4.500" stroke="#404040" stroke-width="1.300"/></svg>
<svg class="ic" style="left:7.2px;top:254.2px" width="15.5" height="15.5" viewBox="0 0 18 18" fill="none"><path d="M9,2 L1.500,16.500 M9,2 L16.500,16.500 M4.500,10 L9,13.500 L13.500,10" stroke="#000" stroke-width="1.700"/></svg>
<svg class="ic" style="left:7.2px;top:271.2px" width="15.5" height="15.5" viewBox="0 0 18 18" fill="none"><path d="M2,2.500 L16,2.500 L10.500,9 L10.500,13 L7.500,13 L7.500,9Z" fill="#38a0f8" stroke="#0830b0" stroke-width="1.100"/><path d="M9,13.500 L9,16.500" stroke="#e03020" stroke-width="1.600"/><circle cx="9" cy="17" r="1" fill="#e03020"/></svg>
<svg class="ic" style="left:7.2px;top:288.2px" width="15.5" height="15.5" viewBox="0 0 18 18" fill="none"><path d="M3.500,2.500 L11,2.500 L14.500,6 L14.500,16.500 L3.500,16.500Z" fill="#fff" stroke="#000" stroke-width="1.200"/><path d="M3.500,7 L14.500,7 M3.500,10 L14.500,10 M3.500,13 L14.500,13 M7,7 L7,16.500 M11,7 L11,16.500" stroke="#000" stroke-width="0.900"/></svg>
<svg class="ic" style="left:7.2px;top:305.2px" width="15.5" height="15.5" viewBox="0 0 18 18" fill="none"><rect x="3.500" y="2.500" width="11" height="13" fill="#fff" stroke="#000" stroke-width="1.300"/><rect x="5.500" y="4.500" width="7" height="4" fill="#c0d8ff"/><rect x="5.500" y="9" width="7" height="5" fill="#3068e8"/><path d="M2.500,3 L2.500,16" stroke="#000" stroke-dasharray="1 1"/></svg>
<svg class="ic" style="left:7.2px;top:322.2px" width="15.5" height="15.5" viewBox="0 0 18 18" fill="none"><rect x="3.500" y="1.500" width="5" height="5" fill="#fff" stroke="#0830b0" stroke-width="1.200"/><path d="M6,6.500 L6,13" stroke="#0830b0" stroke-width="1.300"/><path d="M9,10 L12,14 L16,7" stroke="#000" stroke-width="1.100"/><path d="M2,14.500 L16,14.500" stroke="#30b8f0" stroke-width="2.400"/></svg>
<svg class="ic" style="left:7.2px;top:340.2px" width="15.5" height="15.5" viewBox="0 0 18 18" fill="none"><path d="M4,3 L8,3 L8,10 L15,10 L15,13 L8,16 L3,13 Q2,8 4,3Z" fill="#30c8f8" stroke="#0830b0" stroke-width="1.200"/><path d="M8,10 L8,16" stroke="#0830b0"/></svg>
<div class="abs" style="left:6px;top:360px;width:14px;height:1px;background:#8f9399"></div>
<svg class="ic" style="left:3.4px;top:366.4px" width="17.2" height="17.2" viewBox="0 0 20 20" fill="none"><rect x="1.500" y="5.500" width="12" height="12" fill="#2890f0" stroke="#0820a0" stroke-width="1.500"/><path d="M1.500,5.500 L4.500,3 L16,3 L13.500,5.500 M16,3 L16,14.500 L13.500,17.500" stroke="#0820a0" stroke-width="1.200" fill="#60b8f8"/><circle cx="7.500" cy="11.500" r="3.500" fill="#fff" stroke="#0820a0" stroke-width="1.200"/><path d="M7.500,11.500 L10.500,13.500" stroke="#0820a0"/><path d="M14.500,0 L14.500,7 M11,3.500 L18,3.500" stroke="#000" stroke-width="3.600"/><path d="M14.500,0.500 L14.500,6.500 M11.500,3.500 L17.500,3.500" stroke="#f8d820" stroke-width="2"/></svg>
<svg class="ic" style="left:3.4px;top:388.4px" width="17.2" height="17.2" viewBox="0 0 20 20" fill="none"><path d="M1.500,18.500 L4.500,11.500 L18,11.500 L15,18.500Z" fill="#e8c070" stroke="#4a3000" stroke-width="1"/><path d="M1.500,18.500 L1.500,9 L4,9" stroke="#000" stroke-width="1.100"/><rect x="8.500" y="3.500" width="8" height="8" fill="#58b0f8" stroke="#0820a0" stroke-width="1.300"/><path d="M8.500,3.500 L10.500,1.500 L18.500,1.500 L16.500,3.500 M18.500,1.500 L18.500,9.500 L16.500,11.500" stroke="#0820a0" fill="#90d0f8"/><circle cx="12.500" cy="7.500" r="2" fill="#fff" stroke="#0820a0"/><path d="M3.500,8 Q3.500,4 7,3.500 M5.500,1.500 L7.500,3.500 L5.500,5.500" stroke="#1848d0" stroke-width="1.200"/></svg>
<svg class="abs" style="left:16px;top:378px" width="6" height="28"><path d="M5,0 L5,5 L0,5Z M5,22 L5,27 L0,27Z" fill="#606060"/></svg>
<div class="abs" style="left:6px;top:411px;width:14px;height:1px;background:#8f9399"></div>
<svg class="ic" style="left:3.4px;top:417.4px" width="17.2" height="17.2" viewBox="0 0 20 20" fill="none"><path d="M2,3.500 L17,3.500" stroke="#000" stroke-width="1.300"/><path d="M1,3.500 L5,1.500 L5,5.500Z M18,3.500 L14,1.500 L14,5.500Z" fill="#000"/><path d="M3.500,10 L6.500,7.500 L15.500,7.500 L15.500,15.500 L12.500,18.500 L3.500,18.500Z" fill="#4890f0" stroke="#0820a0" stroke-width="1.200"/><path d="M3.500,10 L12.500,10 L12.500,18.500 M12.500,10 L15.500,7.500" stroke="#0820a0"/><path d="M3.500,10 L6.500,7.500 L15.500,7.500 L12.500,10Z" fill="#38d8f8" stroke="#0820a0"/></svg>
<svg class="ic" style="left:3.4px;top:440.4px" width="17.2" height="17.2" viewBox="0 0 20 20" fill="none"><path d="M2.500,10 L5.500,7.500 L13.500,7.500 L13.500,15.500 L10.500,18.500 L2.500,18.500Z" fill="#4890f0" stroke="#0820a0" stroke-width="1.200"/><path d="M2.500,10 L10.500,10 L10.500,18.500 M10.500,10 L13.500,7.500" stroke="#0820a0"/><path d="M2.500,10 L5.500,7.500 L13.500,7.500 L10.500,10Z" fill="#38d8f8" stroke="#0820a0"/><path d="M9,4 Q14,1 16.500,8" stroke="#000" stroke-width="1.200"/><path d="M8,4.500 L11.500,1.500 L11.500,6Z M16.500,11 L14.500,7.500 L18.500,7.500Z" fill="#000"/></svg>
<svg class="ic" style="left:3.4px;top:462.4px" width="17.2" height="17.2" viewBox="0 0 20 20" fill="none"><path d="M6.500,5 L9.500,2.500 L17.500,2.500 L17.500,9.500 L14.500,12.500 L6.500,12.500Z" fill="#e4e4e4" stroke="#979797" stroke-width="1.100"/><path d="M6.500,5 L14.500,5 L14.500,12.500 M14.500,5 L17.500,2.500" stroke="#979797"/><path d="M8,11 L3,16 M1,16.500 L9,16.500 M2,18.500 L3.500,16.500 M4.500,18.500 L6,16.500 M7,18.500 L8.500,16.500" stroke="#979797" stroke-width="1"/></svg>
<svg class="ic" style="left:3.4px;top:483.4px" width="17.2" height="17.2" viewBox="0 0 20 20" fill="none"><path d="M1.500,6 L4.500,3.500 L12.500,3.500 L12.500,10.500 L9.500,13.500 L1.500,13.500Z" fill="#e4e4e4" stroke="#979797" stroke-width="1.100"/><path d="M1.500,6 L9.500,6 L9.500,13.500 M9.500,6 L12.500,3.500" stroke="#979797"/><path d="M12,2 Q18,4 15.500,12 M14,13.500 L15.500,10 L18,12.500" stroke="#979797" stroke-width="1.200"/><path d="M2,16.500 L12,16.500 M2,16.500 L4,15 M2,16.500 L4,18 M12,16.500 L10,15 M12,16.500 L10,18" stroke="#979797"/></svg>
<div class="abs" style="left:6px;top:507px;width:14px;height:1px;background:#8f9399"></div>
<svg class="ic" style="left:3.4px;top:514.4px" width="17.2" height="17.2" viewBox="0 0 20 20" fill="none"><circle cx="11" cy="8" r="6.500" fill="#ececec" stroke="#979797" stroke-width="1.200"/><path d="M3,7 L3,17 M3,9.500 L6,9.500 M3,13.500 L6,13.500 M3,17 L6,17" stroke="#979797" stroke-width="1.100"/><rect x="1.500" y="5.500" width="3" height="3" fill="#fff" stroke="#979797"/><rect x="5" y="8" width="3" height="3" fill="#fff" stroke="#979797"/><rect x="5" y="12" width="3" height="3" fill="#fff" stroke="#979797"/><rect x="5" y="15.500" width="3" height="3" fill="#fff" stroke="#979797"/></svg>
<svg class="ic" style="left:3.4px;top:536.4px" width="17.2" height="17.2" viewBox="0 0 20 20" fill="none"><path d="M5.500,9 L5.500,6 Q5.500,2.500 9.500,2.500 Q13.500,2.500 13.500,6 L13.500,9" stroke="#979797" stroke-width="1.800"/><rect x="3.500" y="9" width="12" height="8.500" rx="1" fill="#d4d4d4" stroke="#979797" stroke-width="1.100"/><rect x="8.500" y="11.500" width="2" height="3" fill="#888"/></svg>
<svg class="abs" style="left:16px;top:526px" width="6" height="28"><path d="M5,0 L5,5 L0,5Z M5,22 L5,27 L0,27Z" fill="#606060"/></svg>
<div class="abs" style="left:6px;top:559px;width:14px;height:1px;background:#8f9399"></div>
<svg class="ic" style="left:3.4px;top:566.4px" width="17.2" height="17.2" viewBox="0 0 20 20" fill="none"><rect x="2.500" y="9.500" width="11" height="8" fill="#f4f4f4" stroke="#979797" stroke-width="1.100"/><rect x="4.500" y="11.500" width="3" height="3" fill="#fff" stroke="#979797"/><path d="M10.500,6 L13,4 L18.500,4 L18.500,9 L16,11.500 L10.500,11.500Z" fill="#d8d8d8" stroke="#979797"/><path d="M10.500,6 L16,6 L16,11.500 M16,6 L18.500,4" stroke="#979797"/><path d="M3.500,7 Q3.500,3 8,3.500 M6,1.500 L3.500,3.500 L6,5.500" stroke="#979797" stroke-width="1.100"/></svg>
<svg class="ic" style="left:3.4px;top:588.4px" width="17.2" height="17.2" viewBox="0 0 20 20" fill="none"><rect x="2.500" y="9.500" width="8" height="9" fill="#fff" stroke="#979797" stroke-width="1.100"/><path d="M2.500,12.500 L10.500,12.500 M2.500,15.500 L10.500,15.500 M5.500,9.500 L5.500,18.500 M8,9.500 L8,18.500" stroke="#979797"/><path d="M9,8.500 L14,3 L18.500,8.500Z" fill="#d8d8d8" stroke="#979797"/><path d="M3.500,7 Q3.500,3 8,3.500 M6,1.500 L3.500,3.500 L6,5.500" stroke="#979797" stroke-width="1.100"/></svg>
<div class="abs" style="left:1px;top:609px;width:25px;height:12px;background:linear-gradient(90deg,#c4c6ca 0%,#8a8d92 60%,#74777c 100%);border-radius:0 0 0 5px"></div>
<svg class="abs" style="left:14px;top:610px" width="10" height="10"><path d="M2.500,2 L2.500,8" stroke="#000" stroke-width="1.300"/><path d="M4.500,1.500 L8.500,5 L4.500,8.500Z" fill="#000"/></svg>
<!--/LEFTBAR-->
<!--TREE-->
<!-- tree panel -->
<div class="abs" style="left:30px;top:151px;width:198px;height:18px;background:#bccbdc"></div>
<span class="abs" style="left:33px;top:154px;font-size:11px;white-space:pre;color:#1a1a1a">Дерево модели</span>
<svg class="abs" style="left:197px;top:154px" width="30" height="12"><path d="M3.5,1.5 L3.5,6.5 M7.5,1.5 L7.5,6.5 M3.5,1.5 L7.5,1.5 M6.5,1.5 L6.5,6.5 M1.5,6.5 L9.5,6.5 M5.5,6.5 L5.5,10.5" stroke="#000" stroke-width="1" fill="none"/><path d="M18.5,2 L25.5,9.5 M25.5,2 L18.5,9.5" stroke="#000" stroke-width="1.6"/></svg>
<div class="abs" style="left:30px;top:169px;width:198px;height:26px;background:linear-gradient(#ffffff 0%,#fbfbfc 50%,#e6e8ec 100%)"></div>
<div class="abs" style="left:228px;top:151px;width:5px;height:487px;background:linear-gradient(90deg,#eceef1,#dfe2e6)"></div>
<div class="abs" style="left:31px;top:171px;width:22px;height:22px;background:#ffd972;border:1px solid #e3b549;border-radius:3px"></div>
<svg class="abs" style="left:30px;top:169px" width="120" height="26" viewBox="30 169 120 26" fill="none">
<path d="M37.500,176.500 L37.500,189.500 L40,189.500 M37.500,181.500 L43.500,181.500 M41.500,181.500 L41.500,185.500 L43.500,185.500" stroke="#000" stroke-width="1.200"/>
<rect x="36" y="173.500" width="3" height="3" fill="#fff" stroke="#000" stroke-width="0.900"/><g fill="#40d8e8" stroke="#000" stroke-width="0.900"><rect x="43.500" y="180" width="3" height="3"/><rect x="43.500" y="184.500" width="3" height="3"/><rect x="40" y="188" width="3" height="3"/></g>
<path d="M65.5,175.5 L59.5,175.5 L59.5,188.5 L65.5,188.5 M59.5,182 L64.5,182" stroke="#000" stroke-width="1.3"/>
<path d="M64,176 L65.5,178 L68,174.5 M64,181.5 L65.5,183.5 L68,180 M64,187 L65.5,189 L68,185.5" stroke="#222" stroke-width="0.9"/>
<path d="M69,177.5 L73,177.5 M69,182.5 L73,182.5 M69,187.5 L73,187.5" stroke="#1010a0" stroke-width="2"/>
<path d="M79,180.5 L85,180.5 L82,183.5Z" fill="#000"/>
<path d="M91.500,174 L91.500,191" stroke="#8f9399" stroke-width="1"/>
<rect x="101.5" y="174.500" width="9" height="14" fill="#fff" stroke="#10109a" stroke-width="1.3"/><path d="M101,186 L111,186" stroke="#10109a" stroke-width="1.2"/><path d="M104,177.5 L108,177.5 M106,177.5 L106,182.5 M106,180 L108,180 M106,182.5 L108,182.5" stroke="#000" stroke-width="0.9"/>
<rect x="121.5" y="176.5" width="8" height="11" fill="#f4f4f4" stroke="#b0b0b0"/><rect x="127.5" y="179.5" width="8" height="11" fill="#f4f4f4" stroke="#b0b0b0"/><path d="M123,179.500 L128,179.500 M123,182.5 L128,182.5 M129,185.5 L134,185.5 M129,187.5 L134,187.5" stroke="#b8b8b8"/><path d="M130,175.5 L134,175.5 L134,178 M132.500,174 L134.500,175.500 L132.500,177" stroke="#b0b0b0"/>
</svg>
<div class="abs" style="left:30px;top:195px;width:199px;height:424px;border:1px solid #a0a3a8;background:#f2f3f5"></div>
<div class="abs" style="left:33px;top:198px;width:192px;height:418px;border:1px solid #a8abb0;background:#fff"></div>
<!-- scrollbar -->
<div class="abs" style="left:34px;top:598px;width:190px;height:16px;background:#f0f0f0"></div>
<div class="abs" style="left:52px;top:599px;width:91px;height:14px;background:#cdcdcd"></div>
<svg class="abs" style="left:34px;top:598px" width="190" height="16"><path d="M11,4 L6.500,8 L11,12 M179,4 L183.500,8 L179,12" fill="none" stroke="#3a3a3a" stroke-width="1.7"/></svg>
<!-- tree rows -->
<span class="abs" style="left:63px;top:203px;font-size:12px;white-space:pre;color:#1a1a1a;letter-spacing:0.08px">(-) Сборка (Тел-0, Сборочны</span><span class="abs" style="left:222px;top:203px;font-size:12px;color:#1a1a1a">:</span>
<span class="abs" style="left:86px;top:223px;font-size:12px;white-space:pre;color:#1a1a1a;letter-spacing:0.1px">Системы координат</span>
<span class="abs" style="left:86px;top:243px;font-size:12px;white-space:pre;color:#1a1a1a;letter-spacing:0.1px">Компоненты</span>
<span class="abs" style="left:86px;top:263px;font-size:12px;white-space:pre;color:#1a1a1a;letter-spacing:0.1px">Сопряжения</span>
<svg class="abs" style="left:34px;top:199px" width="60" height="84" viewBox="34 199 60 84" fill="none">
<path d="M48.500,218 L48.500,270" stroke="#909090" stroke-dasharray="1 1"/>
<path d="M54,230.500 L61,230.500 M54,250.500 L61,250.500 M54,270.500 L61,270.500" stroke="#909090" stroke-dasharray="1 1"/>
<g id="pl"><rect x="44.500" y="226.500" width="8" height="8" rx="1" fill="#f4f4f6" stroke="#9a9aa8"/><path d="M46.500,230.500 L50.500,230.500 M48.500,228.500 L48.500,232.500" stroke="#2a2a8a"/></g>
<use href="#pl" y="20"/><use href="#pl" y="40"/>
<!-- root icon -->
<path d="M41,205.500 L43,203.800 L50,203.800 L54,207.500 L54,214 L55.800,215 L55.800,217 L54,217 L53.200,217.500 L41,217.500Z" fill="#ffe48c" stroke="#000" stroke-width="1.250"/>
<path d="M43.500,206 L49.500,206 L52,208.500 L52,215.500 L43.500,215.500Z" fill="#ffe390" stroke="#000" stroke-width="0.900"/>
<circle cx="47.300" cy="211" r="2.300" fill="#fff6d0" stroke="#000" stroke-width="1.100"/><path d="M46.200,212.200 L48.500,209.900" stroke="#000" stroke-width="1"/>
<path d="M39.500,203 L44,210 L48.500,201 L44,207Z" fill="#f01818" stroke="#f01818" stroke-width="0.700" stroke-linejoin="round"/>
<!-- CS icon -->
<path d="M65.500,228 L68.600,224 L76.500,224 L76.500,232.500 L73,236 L65.500,236Z" fill="#bfe2f8" stroke="#1a1ac8" stroke-width="1.200"/>
<path d="M65.500,228 L73,228 L73,236 M73,228 L76.500,224" stroke="#1a1ac8" stroke-width="1"/>
<path d="M68.600,222 L68.600,233" stroke="#1a1ac8" stroke-width="1.100"/><path d="M68.600,232.500 L79,232.500" stroke="#18a048" stroke-width="1.200"/><path d="M68.600,233 L63,238" stroke="#e02020" stroke-width="1.200"/>
<!-- Components icon -->
<path d="M68,246.500 L68,254.500 L72,254.500 M68,250 L72,250" stroke="#000" stroke-width="1.400"/>
<path d="M72,247 L76.500,251.500 L72,251.500Z M72,253 L75.500,257.500 L72,257.500Z" fill="#20d0f0" stroke="#1020d0" stroke-width="1"/>
<path d="M62.500,242.500 L66.500,249.500 L71.500,241 L66.500,246.500Z" fill="#f01818" stroke="#f01818" stroke-width="0.700" stroke-linejoin="round"/>
<!-- Mates icon (paperclip) -->
<path d="M67,273.500 L74,265.800 Q76.500,263.500 78,265.300 Q79.500,267.300 77.300,269.500 L69.300,277.300 Q66.500,279.300 64.500,277.300 Q63,275.300 65,273 L72.500,265 " stroke="#1414c8" stroke-width="2.800"/>
<path d="M67,273.500 L74,265.800 Q76.500,263.500 78,265.300 Q79.500,267.300 77.300,269.500 L69.300,277.300 Q66.500,279.300 64.500,277.300 Q63,275.300 65,273 L72.500,265" stroke="#fff" stroke-width="0.800"/>
</svg>
<!-- bottom tabs -->
<div class="abs" style="left:32px;top:618px;width:70px;height:18px;z-index:1;background:#fff;border:1px solid #a9acb2;border-top:none;border-radius:0 0 3px 3px"></div>
<span class="abs" style="left:36px;top:622px;z-index:2;font-size:11px;white-space:pre;color:#1a1a1a">Построение</span>
<span class="abs" style="left:109px;top:622px;font-size:11px;white-space:pre;color:#1a1a1a">Исполнения</span>
<span class="abs" style="left:182px;top:622px;font-size:11px;white-space:pre;color:#1a1a1a">Зоны</span>
<!--/TREE-->
<!--VIEWPORT-->
<div class="abs" style="left:233px;top:150px;width:1129px;height:488px;background:#b4b6b9"></div><div class="abs" style="left:234px;top:151px;width:1128px;height:487px;background:#707074"></div>
<svg class="abs" style="left:235px;top:152px" width="1126" height="485" viewBox="235 152 1126 485" shape-rendering="geometricPrecision">
<defs>
<linearGradient id="sky" gradientUnits="userSpaceOnUse" x1="0" y1="152" x2="0" y2="637"><stop offset="0" stop-color="#6aa5e2"/><stop offset="0.5" stop-color="#b1d0f0"/><stop offset="0.93" stop-color="#f6f9fd"/><stop offset="1" stop-color="#ffffff"/></linearGradient>
<linearGradient id="cyl1" x1="0" y1="0" x2="1" y2="0"><stop offset="0" stop-color="#fff"/><stop offset="0.55" stop-color="#fff"/><stop offset="0.75" stop-color="#ececec"/><stop offset="1" stop-color="#c9c9c9"/></linearGradient><linearGradient id="topch" x1="0" y1="0" x2="1" y2="0"><stop offset="0" stop-color="#fff"/><stop offset="0.7" stop-color="#fff"/><stop offset="1" stop-color="#ececec"/></linearGradient>
<linearGradient id="cyl2" x1="0" y1="0" x2="1" y2="0"><stop offset="0" stop-color="#fff"/><stop offset="0.55" stop-color="#fff"/><stop offset="1" stop-color="#ededef"/></linearGradient>
<linearGradient id="endg" x1="0" y1="0" x2="1" y2="0"><stop offset="0" stop-color="#d2d2d2"/><stop offset="0.12" stop-color="#c4c4c4"/><stop offset="0.45" stop-color="#a2a2a2"/><stop offset="1" stop-color="#979797"/></linearGradient>
<linearGradient id="endc" x1="0" y1="0" x2="1" y2="0"><stop offset="0" stop-color="#fff"/><stop offset="0.4" stop-color="#f0f0f0"/><stop offset="1" stop-color="#b5b5b5"/></linearGradient>
<linearGradient id="forkout" gradientUnits="userSpaceOnUse" x1="0" y1="273" x2="0" y2="516"><stop offset="0" stop-color="#fff"/><stop offset="0.5" stop-color="#fff"/><stop offset="0.5" stop-color="#b4b4b4"/><stop offset="1" stop-color="#b0b0b0"/></linearGradient>
<linearGradient id="slotg" gradientUnits="userSpaceOnUse" x1="0" y1="328" x2="0" y2="461"><stop offset="0" stop-color="#969696"/><stop offset="0.45" stop-color="#a0a0a0"/><stop offset="0.8" stop-color="#e8e8e8"/><stop offset="1" stop-color="#fdfdfd"/></linearGradient>
<linearGradient id="earout" gradientUnits="userSpaceOnUse" x1="0" y1="286" x2="0" y2="503"><stop offset="0" stop-color="#fff"/><stop offset="0.5" stop-color="#fff"/><stop offset="0.62" stop-color="#d4d4d4"/><stop offset="1" stop-color="#c4c4c4"/></linearGradient><linearGradient id="earR" gradientUnits="userSpaceOnUse" x1="1270" y1="0" x2="1332" y2="0"><stop offset="0" stop-color="#b8b8b8" stop-opacity="0"/><stop offset="1" stop-color="#b0b0b0" stop-opacity="1"/></linearGradient>
<linearGradient id="botch" x1="0" y1="0" x2="0" y2="1"><stop offset="0" stop-color="#f4f4f4"/><stop offset="1" stop-color="#a5a5a5"/></linearGradient>
</defs>
<rect x="235" y="152" width="1126" height="485" fill="url(#sky)"/>
<!-- FORK outer silhouette -->
<path id="forkO" fill="url(#forkout)" stroke="#000" stroke-width="1.3" stroke-linejoin="round" d="M410.3,334.1 L473.7,334.1 L509.4,328.3 L541.8,312.5 L569.8,284.7 L575.3,278.3 L590.5,273.4 L982,273.4 Q985.7,273.6 985.7,277.5 L985.7,330 Q985.7,334 982,334.1 L674.6,334.1 L650.3,338.7 L629.3,353.7 L616.1,376.2 L614.3,394.5 L616.1,412.8 L629.3,435.3 L650.3,450.3 L674.6,454.9 L982,454.9 Q985.7,455 985.7,459 L985.7,511.5 Q985.7,515.4 982,515.6 L590.5,515.6 L575.3,510.7 L569.8,504.3 L541.8,476.5 L509.4,460.7 L473.7,454.9 L410.3,454.9 Z"/>
<!-- slot band -->
<path fill="url(#slotg)" stroke="#000" stroke-width="1.2" stroke-linejoin="round" d="M916.2,328.6 L673.6,328.6 L649.4,333.2 L626.9,349.1 L612.8,373.5 L610.1,394.5 L612.8,415.5 L626.9,439.9 L649.4,455.8 L673.6,460.4 L916.2,460.4 L916.2,454.9 L674.6,454.9 L650.3,450.3 L629.3,435.3 L616.1,412.8 L614.3,394.5 L616.1,376.2 L629.3,353.7 L650.3,338.7 L674.6,334.1 L916.2,334.1 Z"/>
<!-- fork inner face -->
<path fill="#cbcbcb" stroke="#000" stroke-width="1.2" stroke-linejoin="round" d="M410.3,340.3 L474.6,340.3 L512.5,334.1 L544.2,318.9 L575.3,287.5 L579.9,283.4 L591.8,279.2 L916.2,279.2 L916.2,328.6 L673.6,328.6 L649.4,333.2 L626.9,349.1 L612.8,373.5 L610.1,394.5 L612.8,415.5 L626.9,439.9 L649.4,455.8 L673.6,460.4 L916.2,460.4 L916.2,509.8 L591.8,509.8 L579.9,505.6 L575.3,501.5 L544.2,470.1 L512.5,454.9 L474.6,448.7 L410.3,448.7 Z"/>
<!-- small chamfer ticks -->
<path stroke="#000" stroke-width="1" fill="none" d="M473.7,334.1 L474.6,340.3 M569.8,284.7 L575.3,287.5 M575.3,278.3 L579.9,283.4 M590.5,273.4 L591.8,279.2 M473.7,454.9 L474.6,448.7 M569.8,504.3 L575.3,501.5 M575.3,510.7 L579.9,505.6 M590.5,515.6 L591.8,509.8 M673.6,328.6 L674.6,334.1 M673.6,460.4 L674.6,454.9"/>
<!-- arm cylindrical ends -->
<rect x="916.2" y="279.2" width="69.5" height="49.4" fill="url(#endg)" stroke="#000" stroke-width="1.2"/>
<rect x="916.2" y="460.4" width="69.5" height="49.4" fill="url(#endg)" stroke="#000" stroke-width="1.2"/>
<path d="M916.2,273.4 L982,273.4 Q985.7,273.6 985.7,279.2 L916.2,279.2Z" fill="url(#endc)" stroke="#000" stroke-width="1.1"/>
<path d="M916.2,328.6 L985.7,328.6 Q985.7,334 982,334.1 L916.2,334.1Z" fill="#9d9d9d" stroke="#000" stroke-width="1.1"/>
<path d="M916.2,454.9 L982,454.9 Q985.7,455 985.7,460.4 L916.2,460.4Z" fill="url(#endc)" stroke="#000" stroke-width="1.1"/>
<path d="M916.2,509.8 L985.7,509.8 Q985.7,515.4 982,515.6 L916.2,515.6Z" fill="#9d9d9d" stroke="#000" stroke-width="1.1"/>
<!-- left cylinder of fork -->
<path d="M268,334.100 L410.300,334.100 L410.300,454.900 L268,454.900 Q263.500,454.500 263.500,450 L263.500,339 Q263.500,334.300 268,334.100Z" fill="url(#cyl1)" stroke="#000" stroke-width="1.150"/>
<rect x="264.500" y="334.800" width="145.300" height="5.200" fill="url(#topch)"/>
<rect x="264.2" y="448.7" width="146" height="6" fill="url(#botch)"/>
<path d="M264,340.4 L410.3,340.4 M264,448.7 L410.3,448.7 M410.3,334.1 L410.3,454.9 M263.500,450 Q263.500,454.700 268,454.900 L410.300,454.900 M268,334.100 Q263.500,334.300 263.500,339" stroke="#000" stroke-width="1.150" fill="none"/>
<!-- EAR outer -->
<path fill="url(#earout)" stroke="#000" stroke-width="1.3" stroke-linejoin="round" d="M874.5,334.3 L1020,334.3 L1051.2,329.7 L1091,318.7 L1203.7,287.4 L1224,286.4 L1245,288.5 L1265.3,294.7 L1284,304.6 L1300.4,318.1 L1313.9,334.5 L1323.8,353.2 L1330,373.5 L1332,394.5 L1330,415.5 L1323.8,435.8 L1313.9,454.5 L1300.4,470.9 L1284,484.4 L1265.3,494.3 L1245,500.5 L1224,502.6 L1203.7,501.6 L1091,470.3 L1051.2,459.3 L1020,454.7 L874.5,454.7 Z"/>
<path fill="url(#earR)" d="M874.5,334.3 L1020,334.3 L1051.2,329.7 L1091,318.7 L1203.7,287.4 L1224,286.4 L1245,288.5 L1265.3,294.7 L1284,304.6 L1300.4,318.1 L1313.9,334.5 L1323.8,353.2 L1330,373.5 L1332,394.5 L1330,415.5 L1323.8,435.8 L1313.9,454.5 L1300.4,470.9 L1284,484.4 L1265.3,494.3 L1245,500.5 L1224,502.6 L1203.7,501.6 L1091,470.3 L1051.2,459.3 L1020,454.7 L874.5,454.7 Z"/>
<!-- EAR inner face -->
<path fill="#f2f2f2" stroke="#000" stroke-width="1.1" stroke-linejoin="round" d="M874.5,340.4 L1020.5,340.4 L1052.5,335.8 L1091.5,324.6 L1203.7,293.8 L1224,292.5 L1243.9,294.5 L1263,300.3 L1280.7,309.7 L1296.1,322.4 L1308.8,337.8 L1318.2,355.5 L1324,374.6 L1326,394.5 L1324,414.4 L1318.2,433.5 L1308.8,451.2 L1296.1,466.6 L1280.7,479.3 L1263,488.7 L1243.9,494.5 L1224,496.5 L1203.7,495.2 L1091.5,464.4 L1052.5,453.2 L1020.5,448.6 L874.5,448.6 Z"/>
<path stroke="#000" stroke-width="1" fill="none" d="M1020,334.3 L1020.5,340.4 M1051.2,329.7 L1052.5,335.8 M1091.2,319 L1091.2,470 M1203.7,287.4 L1203.7,293.8 M1020,454.7 L1020.5,448.6 M1051.2,459.3 L1052.5,453.2 M1203.7,501.6 L1203.7,495.2"/>
<!-- ear hole -->
<polygon fill="url(#sky)" stroke="#000" stroke-width="1.2" points="1272,394.5 1270.4,407 1265.6,418.5 1258,428.4 1248,436.1 1236.4,440.9 1224,442.5 1211.6,440.9 1200,436.1 1190,428.4 1182.4,418.5 1177.6,407 1176,394.5 1177.6,382 1182.4,370.5 1190,360.6 1200,352.9 1211.6,348.1 1224,346.5 1236.4,348.1 1248,352.9 1258,360.6 1265.6,370.5 1270.4,382"/>
<!-- ear left cylinder -->
<path d="M773,334.5 L874.5,334.5 L874.5,454.7 L773,454.7 Q769.6,454.4 769.6,451 L769.6,338 Q769.6,334.7 773,334.5Z" fill="url(#cyl2)" stroke="#000" stroke-width="1.3"/>
<rect x="770.3" y="448.7" width="104" height="5.6" fill="url(#botch)" opacity="0.55"/>
<path d="M770,340.5 L874.5,340.5 M770,448.6 L874.5,448.6 M874.5,334.5 L874.5,454.7" stroke="#000" stroke-width="1.2" fill="none"/>
<!-- axes -->
<line x1="371.5" y1="152" x2="371.5" y2="637" stroke="#ee8585" stroke-width="1.2"/>
<line x1="235" y1="394.5" x2="673.6" y2="394.5" stroke="#2090f0" stroke-width="1.3"/>
<line x1="371.5" y1="394.5" x2="410" y2="394.5" stroke="#ee8585" stroke-width="1.3"/>
<line x1="371.5" y1="394.5" x2="371.5" y2="432" stroke="#2090f0" stroke-width="1.3"/>
<line x1="673.5" y1="152" x2="673.5" y2="637" stroke="#c828c8" stroke-width="1" stroke-dasharray="2 2"/>
<line x1="673.5" y1="154" x2="673.5" y2="637" stroke="#9be21c" stroke-width="1" stroke-dasharray="2 2"/>
<!-- CS gizmo -->
<line x1="310" y1="564.700" x2="346" y2="564.700" stroke="#e6b08c" stroke-width="1.200"/><line x1="310" y1="566.300" x2="346" y2="566.300" stroke="#f59090" stroke-width="1.600"/>
<polygon points="344,562.300 359,565.600 344,569" fill="#f6a0a0" stroke="#ee8080" stroke-width="0.800"/><path d="M346.500,563 L346.500,568.500 M349,563.500 L349,568" stroke="#ee8888" stroke-width="0.800"/>
<line x1="303.200" y1="572" x2="303.200" y2="607" stroke="#7cb4f0" stroke-width="1.500"/><line x1="305" y1="572" x2="305" y2="607" stroke="#a8d0f8" stroke-width="1.500"/>
<polygon points="300.500,606.500 307.700,606.500 304.100,620.800" fill="#9ccaf6" stroke="#78b0ee" stroke-width="0.800"/><path d="M302.500,607 L304,618 M305.800,607 L304.300,618" stroke="#6aa8ee" stroke-width="0.700"/>
<circle cx="304.100" cy="565.500" r="6" fill="#8c8c8c" stroke="#ead57a" stroke-width="1.800"/>
<path d="M301.200,561.800 L304.100,566 L307,561.800 M304.100,566 L304.100,570" stroke="#2f8f4a" stroke-width="1.700" fill="none"/>
<path d="M364.300,561 L370.700,569.700 M370.700,561 L364.300,569.700" stroke="#f07878" stroke-width="1.100" fill="none"/>
<path d="M301,625.800 L307.200,625.800 L301,633.500 L307.300,633.500" stroke="#4a86f0" stroke-width="1.100" fill="none"/>
</svg>
<!-- frame right/bottom -->
<div class="abs" style="left:1362px;top:150px;width:1px;height:489px;background:#fdfdfd"></div><div class="abs" style="left:233px;top:638px;width:1130px;height:1px;background:#fdfdfd"></div>
<div class="abs" style="left:1361px;top:150px;width:1px;height:488px;background:#e2e3e8"></div>
<div class="abs" style="left:235px;top:637px;width:1127px;height:1px;background:#e6e7ea"></div>
<!--/VIEWPORT-->
<!--BOTTOM-->
<!-- bottom panel -->
<div class="abs" style="left:28px;top:646px;width:2px;height:58px;background:repeating-linear-gradient(#b9bcc1 0 1px,#fff 1px 2px,transparent 2px 4px)"></div>
<div class="abs" style="left:32px;top:649px;width:1328px;height:35px;border:1px solid #808388;border-right-color:#a0a3a8;border-bottom-color:#5e6064;background:linear-gradient(#ffffff 0%,#fdfdfd 60%,#f1f2f3 100%);box-shadow:inset 2px 2px 0 #eceef0"></div>
<!--/BOTTOM-->
<div id="status" class="abs"><span>Щелкните левой кнопкой мыши на объекте для его выделения (вместе с Ctrl - добавить к выделенным)</span></div>
<div class="abs" style="left:1279px;top:711px;width:1px;height:17px;background:#8c8f94"></div>
<div class="abs" style="left:1280px;top:711px;width:1px;height:17px;background:#fafafa"></div>
<div id="taskbar" class="abs">
<!--TASKICONS-->
<div class="abs" style="left:637px;top:0;width:44px;height:40px;background:#54544f"></div>
<div class="abs" style="left:681px;top:0;width:4px;height:40px;background:#3c3238"></div>
<!-- underlines -->
<div class="abs" style="left:151px;top:38px;width:32px;height:2px;background:#dfeabc"></div><div class="abs" style="left:183px;top:38px;width:8px;height:2px;background:#aab690"></div>
<div class="abs" style="left:494px;top:38px;width:32px;height:2px;background:#dfeabc"></div><div class="abs" style="left:526px;top:38px;width:8px;height:2px;background:#aab690"></div>
<div class="abs" style="left:592px;top:38px;width:40px;height:2px;background:#dfeabc"></div>
<div class="abs" style="left:637px;top:38px;width:44px;height:2px;background:#dfeabc"></div><div class="abs" style="left:681px;top:38px;width:4px;height:2px;background:#aab690"></div>
<div class="abs" style="left:690px;top:38px;width:40px;height:2px;background:#dfeabc"></div>
<svg class="abs" style="left:0;top:0" width="1366" height="40" viewBox="0 728 1366 40" fill="none">
<!-- start -->
<path d="M15.500,742 L22.500,741 L22.500,747.500 L15.500,747.500Z M23.500,740.800 L32.500,739.500 L32.500,747.500 L23.500,747.500Z M15.500,748.500 L22.500,748.500 L22.500,755 L15.500,754Z M23.500,748.500 L32.500,748.500 L32.500,756.500 L23.500,755.200Z" fill="#fff"/>
<!-- search -->
<circle cx="74" cy="745.300" r="5.300" stroke="#fff" stroke-width="1.500"/><path d="M70.300,749.200 L64.500,755.300" stroke="#fff" stroke-width="1.600"/>
<!-- task view -->
<path d="M112.500,741 L123.500,741 M112.500,755 L123.500,755" stroke="#fff" stroke-width="1.300"/><rect x="113.500" y="743.500" width="9" height="8.500" stroke="#fff" stroke-width="1.300"/><path d="M127,740.500 L127,742.500 M127,745 L127,755" stroke="#fff" stroke-width="1.600"/>
<!-- folder -->
<path d="M160.500,741 Q160.500,739.500 162,739.500 L168,739.500 L170,741.500 L180.500,741.500 Q181.800,741.500 181.800,743 L181.800,755.500 L160.500,755.500Z" fill="#f0b840"/><path d="M160.500,744 L181.800,744 L181.800,755.500 L160.500,755.500Z" fill="#fad66a"/><path d="M165,756.500 L165,750 L177,750 L177,756.500 L173.500,756.500 L173.500,753 L168.500,753 L168.500,756.500Z" fill="#3a96e8"/>
<!-- settings -->
<rect x="209.500" y="737" width="21.500" height="21.500" rx="5" fill="#1a70c8" stroke="#14284a" stroke-width="1.500"/><rect x="213.500" y="741" width="9" height="12" fill="#e8f0f8" stroke="#14407a" stroke-width="0.800"/><path d="M215,744 L221,744 M215,746.500 L221,746.500 M215,749 L219,749" stroke="#14407a" stroke-width="0.800"/><circle cx="224.500" cy="752" r="3.200" fill="#fff" stroke="#e8f0f8" stroke-width="1.600" stroke-dasharray="1.500 1"/><circle cx="224.500" cy="752" r="1.200" fill="#1a70c8"/>
<!-- power -->
<rect x="258" y="737.500" width="21" height="21" rx="4.500" fill="#8a0c24" stroke="#4a0814" stroke-width="1.200"/><path d="M265,744.500 Q262,747 263,750.500 Q264.500,753.500 268.500,753.500 Q272.500,753.500 274,750.500 Q275,747 272,744.500" stroke="#f4e8e8" stroke-width="1.500"/><path d="M268.500,742 L268.500,748" stroke="#f4e8e8" stroke-width="1.600"/>
<!-- yandex -->
<circle cx="317.500" cy="747.800" r="11" fill="#f4f4f4"/><path d="M311.500,741.500 L317.500,749 L323.500,741.500 M317.500,749 L317.500,756" stroke="#f01818" stroke-width="2.400"/>
<!-- edge -->
<path d="M357.500,749.500 Q358,740 367,739.500 Q376,740 376.500,749.500 L364,749.500 Q364.500,753.500 369,754 Q372.500,754.200 375.500,752.500 L375.500,756.500 Q372,758 368,757.800 Q359.500,757 359.200,748.500 Q359.800,744.500 363,743 Q360,745 357.500,749.500Z M364,746.500 L371,746.500 Q370.800,743 367.500,743 Q364.500,743.200 364,746.500Z" fill="#1a80e8" fill-rule="evenodd"/>
<!-- calc -->
<rect x="406.500" y="736.500" width="18" height="23" fill="#fff"/><rect x="409" y="739" width="13" height="4" fill="#2c2b27"/><g fill="#2c2b27"><rect x="409" y="745.500" width="3" height="2.600"/><rect x="414" y="745.500" width="3" height="2.600"/><rect x="419" y="745.500" width="3" height="2.600"/><rect x="409" y="750" width="3" height="2.600"/><rect x="414" y="750" width="3" height="2.600"/><rect x="419" y="750" width="3" height="2.600"/><rect x="409" y="754.500" width="3" height="2.600"/><rect x="414" y="754.500" width="3" height="2.600"/><rect x="419" y="754.500" width="3" height="2.600"/></g>
<!-- skype -->
<circle cx="461.500" cy="745" r="7.500" fill="#18a0e8"/><circle cx="468" cy="751.500" r="7" fill="#18a0e8"/><circle cx="464.500" cy="748" r="9.500" fill="#18a0e8"/><text x="460.300" y="753" font-family="Liberation Sans" font-weight="bold" font-size="14" fill="#fff">S</text>
<!-- firefox -->
<circle cx="514" cy="749" r="10" fill="#e8281c"/><path d="M505,744 Q506,738 511,737.500 Q509,741 512,742 Q516,736 520,737 Q523,739 524.500,745 Q525.500,752 521,756 Q524,749 518,745 Q512,743 507,748Z" fill="#f8b020"/><circle cx="513.500" cy="748" r="5" fill="#8038c8"/><path d="M509,746 Q512,742.500 516,745 Q513,745 512.500,748 Q512,751 515,752 Q510,752.500 509,749Z" fill="#e85818"/>
<!-- store -->
<path d="M556.500,742 Q556.500,736.500 562.500,736.500 Q568.500,736.500 568.500,742" stroke="#fff" stroke-width="1.500"/><path d="M551,741.500 L574,741.500 L574,757.500 Q574,758.500 573,758.500 L552,758.500 Q551,758.500 551,757.500Z" fill="#fff"/><rect x="557" y="745" width="5" height="5" fill="#e82828"/><rect x="563.200" y="745" width="5" height="5" fill="#68b818"/><rect x="557" y="751.200" width="5" height="5" fill="#1890e8"/><rect x="563.200" y="751.200" width="5" height="5" fill="#f0c810"/>
<!-- megafon -->
<circle cx="611.700" cy="747.800" r="11" fill="#12985c" stroke="#fff" stroke-width="2"/><path d="M611.700,739 L611.700,745 M611.700,747.500 Q610,752 611.700,756.500" stroke="#fff" stroke-width="1.200"/><circle cx="614.500" cy="751.500" r="1" fill="#fff"/><circle cx="617.300" cy="751.500" r="1" fill="#fff"/><circle cx="620" cy="751.500" r="1" fill="#fff"/>
<!-- kompas -->
<circle cx="660.800" cy="747.200" r="10" fill="#5a7a98" stroke="#2278d0" stroke-width="2.600"/><path d="M654,739.500 L660.500,748 M660.500,748 L669,755.500 M660.500,748 L668,739.500 M655,742 L655,755" stroke="#2278d0" stroke-width="2.400"/><path d="M655,759.500 L667,759.500" stroke="#1a2a8a" stroke-width="0.800"/>
<!-- ppt -->
<rect x="699" y="737" width="20.500" height="21" fill="#c01828"/><rect x="701" y="739" width="16.500" height="17" fill="#f0d8c0" stroke="#f8f0e0" stroke-width="1"/><path d="M703,754 L709,746 L713,750 L716,741 L716,754Z" fill="#d83828"/><path d="M704,742 L714,752" stroke="#fff" stroke-width="1.500"/><circle cx="706" cy="744" r="1.800" fill="#e88830"/>
<!-- tray -->
<path d="M1097.500,751 L1103,745.500 L1108.500,751" stroke="#fff" stroke-width="1.400"/>
<rect x="1123.500" y="744.500" width="11" height="7" stroke="#fff" stroke-width="1.200"/><rect x="1135" y="746.500" width="1.500" height="3" fill="#fff"/><rect x="1125" y="746" width="6" height="4" fill="#fff"/><path d="M1119.500,742 L1119.500,745 M1122,742 L1122,745 M1118.500,745 L1123,745 L1123,748 L1118.500,748Z M1120.700,748 L1120.700,751" stroke="#fff" stroke-width="1"/>
<path d="M1144,752.500 L1145.500,752.500 M1147.500,752.500 L1147.500,751 M1150.500,752.500 L1150.500,749 M1153.500,752.500 L1153.500,746.500 M1156.500,752.500 L1156.500,743.500" stroke="#fff" stroke-width="1.700"/>
<circle cx="1175" cy="748" r="8" fill="#12985c"/><path d="M1170,750.500 L1171,750.500 M1173,750.500 L1173,749 M1175.500,750.500 L1175.500,747.500 M1178,750.500 L1178,745.500 M1180.500,750.500 L1180.500,743.500" stroke="#fff" stroke-width="1.200"/><circle cx="1179.500" cy="752.500" r="3.200" fill="#5a1a98" stroke="#2c2b27" stroke-width="0.600"/><circle cx="1179.500" cy="752.500" r="1.200" fill="#fff"/>
<path d="M1191.500,745.500 L1194,745.500 L1197.500,742.500 L1197.500,753.500 L1194,750.500 L1191.500,750.500Z" stroke="#fff" stroke-width="1.100"/><path d="M1200,745.500 Q1201.800,748 1200,750.500 M1202.500,743.500 Q1205.500,748 1202.500,752.500 M1205,742 Q1209,748 1205,754" stroke="#fff" stroke-width="1.100"/>
<rect x="1325.500" y="740.500" width="15.500" height="12" stroke="#fff" stroke-width="1.300"/><path d="M1330,752.500 L1333.500,756 L1337,752.500" stroke="#fff" stroke-width="1.300" fill="#2f3129"/><path d="M1330.500,752.500 L1336.500,752.500" stroke="#2f3129" stroke-width="1.600"/>
<path d="M1361.500,728 L1361.500,768" stroke="#8a8a84" stroke-width="1"/>
</svg>
<span class="abs" style="left:1218px;top:13px;font-size:12px;color:#fff;white-space:pre;letter-spacing:-0.2px">РУС</span>
<span class="abs" style="left:1253px;top:4px;width:53px;text-align:center;font-size:12px;color:#fff;white-space:pre;letter-spacing:-0.3px">12:09</span>
<span class="abs" style="left:1250px;top:22px;width:59px;text-align:center;font-size:12px;color:#fff;white-space:pre;letter-spacing:-0.45px">08.08.2021</span>
<!--/TASKICONS-->
</div>
</body></html>
